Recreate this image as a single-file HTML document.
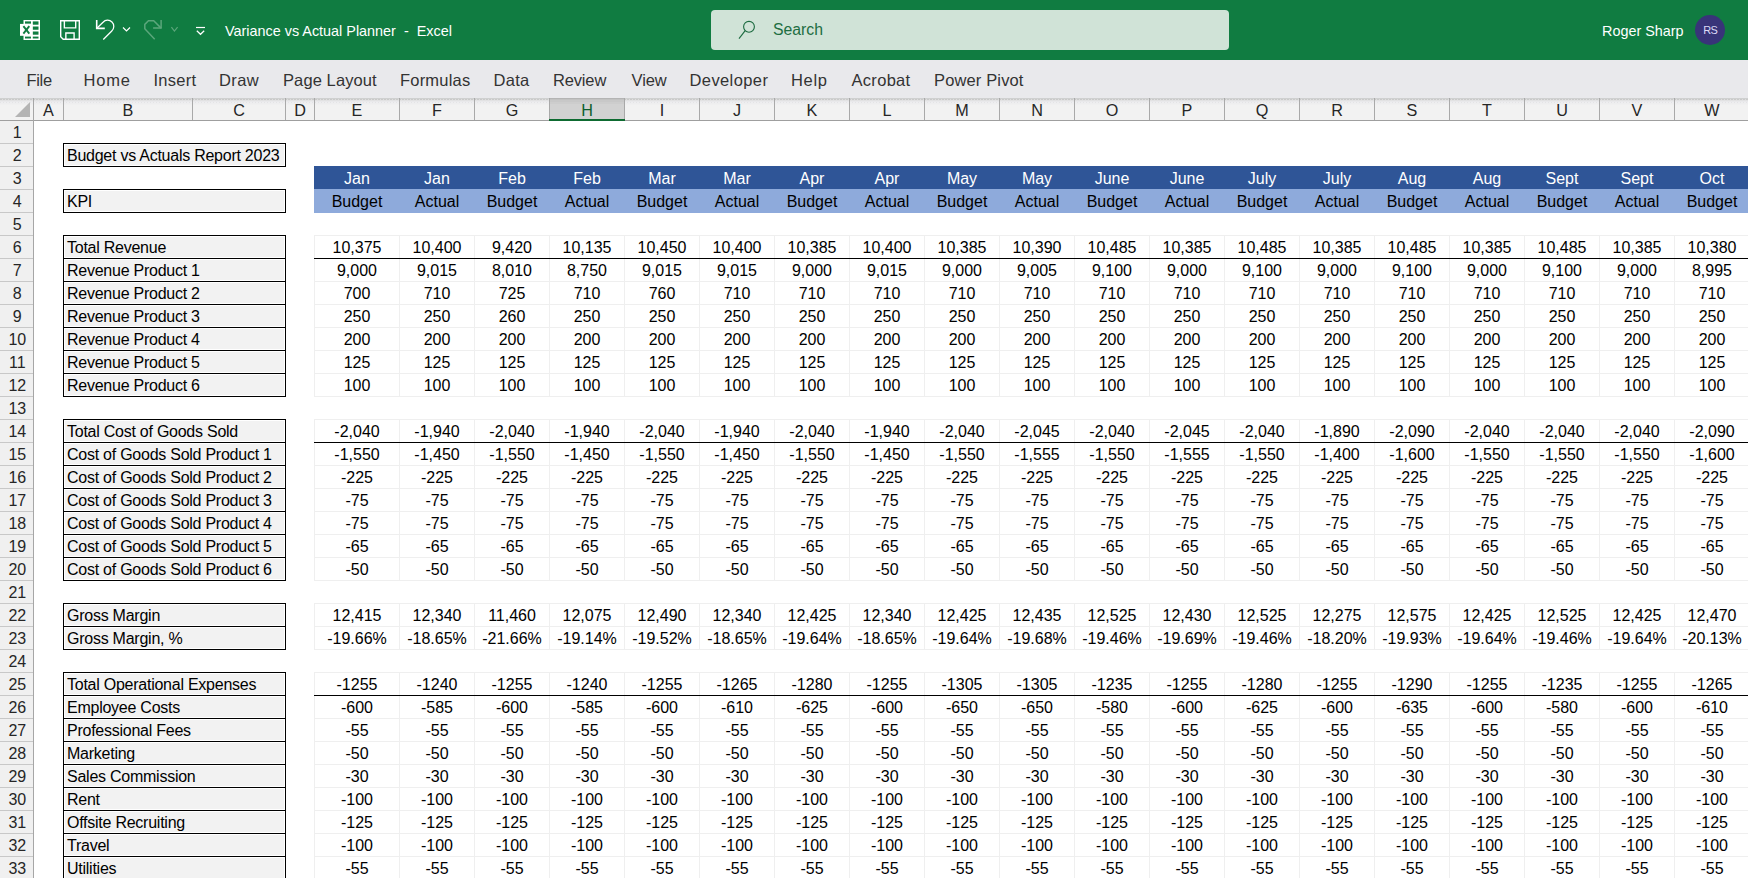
<!DOCTYPE html>
<html><head><meta charset="utf-8"><title>Variance vs Actual Planner - Excel</title><style>
html,body{margin:0;padding:0;}
body{width:1748px;height:878px;overflow:hidden;position:relative;background:#fff;font-family:"Liberation Sans", sans-serif;}
.r{position:absolute;}
.t{position:absolute;white-space:nowrap;font-family:"Liberation Sans", sans-serif;}
.tab{font-size:16.5px;line-height:24px;color:#333;}
</style></head><body>
<div class="r" style="left:0px;top:0px;width:1748px;height:60px;background:#107c41;"></div>
<svg class="r" style="left:20px;top:20px" width="20" height="20" viewBox="0 0 20 20">
<rect x="3.5" y="0" width="16.6" height="20" fill="#fff"/>
<g fill="#107c41">
<rect x="5" y="1.4" width="6" height="2.3"/>
<rect x="5" y="16.6" width="6" height="1.9"/>
<rect x="12.8" y="1.4" width="5.7" height="3.3"/>
<rect x="12.8" y="6.5" width="5.7" height="3.25"/>
<rect x="12.8" y="11.5" width="5.7" height="3.2"/>
<rect x="12.8" y="16.6" width="5.7" height="1.9"/>
</g>
<rect x="0" y="3.9" width="12.2" height="11.9" fill="#fff"/>
<g stroke="#107c41" stroke-width="1.9">
<line x1="3.4" y1="6.2" x2="9.3" y2="13.6"/>
<line x1="9.3" y1="6.2" x2="3.4" y2="13.6"/>
</g>
</svg>
<svg class="r" style="left:60px;top:20px" width="20" height="20" viewBox="0 0 20 20">
<g fill="none" stroke="#fff" stroke-width="1.4">
<path d="M0.7 0.7H19.3V19.3H3.2L0.7 16.8Z"/>
<path d="M4.35 0.7V7.85H15.7V0.7"/>
<path d="M5.85 19.3V13H14.1V19.3"/>
</g></svg>
<svg class="r" style="left:94px;top:18px" width="24" height="24" viewBox="0 0 24 24">
<g fill="none" stroke="#fff" stroke-width="1.25">
<path d="M2.7 2V10.4H10.8" stroke-width="1.6"/>
<path d="M2.6 10.5L9.02 4.22A6.2 6.2 0 1 1 17.78 12.98L9.28 21.48"/>
</g></svg>
<svg class="r" style="left:121px;top:25px" width="11" height="9" viewBox="0 0 11 9">
<path d="M2 2.5L5.5 6L9 2.5" fill="none" stroke="#fff" stroke-width="1.2"/></svg>
<svg class="r" style="left:142px;top:18px" width="24" height="24" viewBox="0 0 24 24">
<g fill="none" stroke="#5ba67b" stroke-width="1.5" stroke-linejoin="miter">
<path d="M19.1 2.1V10.1H11.1"/>
<path d="M19.1 10.1L11.7 2.8H6.45L2.8 6.4V10.8L12.7 21.3"/>
</g></svg>
<svg class="r" style="left:169px;top:25px" width="11" height="9" viewBox="0 0 11 9">
<path d="M2.4 2.2L5.4 6.1L8.6 2.2" fill="none" stroke="#5ba67b" stroke-width="1.2"/></svg>
<svg class="r" style="left:194px;top:24px" width="13" height="13" viewBox="0 0 13 13">
<g fill="none" stroke="#fff" stroke-width="1.2">
<line x1="2" y1="3.5" x2="11" y2="3.5"/>
<path d="M2.8 6.8L6.5 10.3L10.2 6.8"/>
</g></svg>
<div class="t" style="left:225px;top:18.71px;font-size:14.4px;line-height:24px;color:#fff;white-space:pre;">Variance vs Actual Planner  -  Excel</div>
<div class="r" style="left:711px;top:10px;width:518px;height:40px;background:#d0e3d7;border-radius:4px;"></div>
<svg class="r" style="left:736px;top:18px" width="22" height="24" viewBox="0 0 22 24">
<g fill="none" stroke="#1b6a3f" stroke-width="1.1">
<circle cx="13" cy="8.8" r="5.4"/>
<line x1="9.2" y1="12.6" x2="3" y2="20.6"/>
</g></svg>
<div class="t" style="left:773px;top:17.53px;font-size:15.8px;line-height:24px;color:#1d6e42;">Search</div>
<div class="t" style="left:1602px;top:18.71px;font-size:14.4px;line-height:24px;color:#fff;">Roger Sharp</div>
<div class="r" style="left:1695px;top:15px;width:30px;height:30px;background:#383479;border-radius:50%;"></div>
<div class="t" style="left:1695px;top:18.39px;font-size:11px;line-height:24px;color:#dcdaf7;width:30px;text-align:center;letter-spacing:-0.8px;text-indent:0.3px;">RS</div>
<div class="r" style="left:0px;top:60px;width:1748px;height:38px;background:#e9e9ec;"></div>
<div class="t" style="left:26.5px;top:68.28px;font-size:16.5px;line-height:24px;color:#333;letter-spacing:-0.333px;">File</div>
<div class="t" style="left:83.5px;top:68.28px;font-size:16.5px;line-height:24px;color:#333;letter-spacing:0.800px;">Home</div>
<div class="t" style="left:153.5px;top:68.28px;font-size:16.5px;line-height:24px;color:#333;letter-spacing:0.240px;">Insert</div>
<div class="t" style="left:219.0px;top:68.28px;font-size:16.5px;line-height:24px;color:#333;letter-spacing:0.400px;">Draw</div>
<div class="t" style="left:283.0px;top:68.28px;font-size:16.5px;line-height:24px;color:#333;letter-spacing:0.100px;">Page Layout</div>
<div class="t" style="left:400.0px;top:68.28px;font-size:16.5px;line-height:24px;color:#333;letter-spacing:0.200px;">Formulas</div>
<div class="t" style="left:493.5px;top:68.28px;font-size:16.5px;line-height:24px;color:#333;letter-spacing:0.267px;">Data</div>
<div class="t" style="left:553.0px;top:68.28px;font-size:16.5px;line-height:24px;color:#333;letter-spacing:-0.160px;">Review</div>
<div class="t" style="left:631.5px;top:68.28px;font-size:16.5px;line-height:24px;color:#333;letter-spacing:-0.067px;">View</div>
<div class="t" style="left:689.5px;top:68.28px;font-size:16.5px;line-height:24px;color:#333;letter-spacing:0.400px;">Developer</div>
<div class="t" style="left:791.0px;top:68.28px;font-size:16.5px;line-height:24px;color:#333;letter-spacing:0.667px;">Help</div>
<div class="t" style="left:851.5px;top:68.28px;font-size:16.5px;line-height:24px;color:#333;letter-spacing:0.300px;">Acrobat</div>
<div class="t" style="left:934.0px;top:68.28px;font-size:16.5px;line-height:24px;color:#333;letter-spacing:0.140px;">Power Pivot</div>
<div class="r" style="left:0px;top:98px;width:1748px;height:22px;background:linear-gradient(#cfd0d0 0 1px,#d8d8d8 1px 2px,#e2e2e3 2px 3px,#e9e9eb 3px 4px,#ebebed 4px 5px,#eeeeef 5px 6px,#f2f2f2 7px);"></div>
<div class="r" style="left:0px;top:99px;width:1748px;height:1px;background:repeating-linear-gradient(90deg,#c9c9c9 0 2px,#dedede 2px 3px);"></div>
<div class="r" style="left:0px;top:102px;width:1748px;height:1px;background:repeating-linear-gradient(90deg,#e4e4e6 0 1px,#eeeef0 1px 3px);"></div>
<div class="r" style="left:549px;top:98px;width:75px;height:22px;background:linear-gradient(#b4b4b4 0 1px,#c2c2c2 1px 2px,#c8c8c8 2px 4px,#cdcdcd 4px 6px,#d2d2d2 6px);"></div>
<div class="r" style="left:33px;top:98px;width:1px;height:22px;background:#a9a9a9;"></div>
<div class="r" style="left:63px;top:98px;width:1px;height:22px;background:#a9a9a9;"></div>
<div class="r" style="left:192px;top:98px;width:1px;height:22px;background:#a9a9a9;"></div>
<div class="r" style="left:285px;top:98px;width:1px;height:22px;background:#a9a9a9;"></div>
<div class="r" style="left:314px;top:98px;width:1px;height:22px;background:#a9a9a9;"></div>
<div class="r" style="left:399px;top:98px;width:1px;height:22px;background:#a9a9a9;"></div>
<div class="r" style="left:474px;top:98px;width:1px;height:22px;background:#a9a9a9;"></div>
<div class="r" style="left:549px;top:98px;width:1px;height:22px;background:#a9a9a9;"></div>
<div class="r" style="left:624px;top:98px;width:1px;height:22px;background:#a9a9a9;"></div>
<div class="r" style="left:699px;top:98px;width:1px;height:22px;background:#a9a9a9;"></div>
<div class="r" style="left:774px;top:98px;width:1px;height:22px;background:#a9a9a9;"></div>
<div class="r" style="left:849px;top:98px;width:1px;height:22px;background:#a9a9a9;"></div>
<div class="r" style="left:924px;top:98px;width:1px;height:22px;background:#a9a9a9;"></div>
<div class="r" style="left:999px;top:98px;width:1px;height:22px;background:#a9a9a9;"></div>
<div class="r" style="left:1074px;top:98px;width:1px;height:22px;background:#a9a9a9;"></div>
<div class="r" style="left:1149px;top:98px;width:1px;height:22px;background:#a9a9a9;"></div>
<div class="r" style="left:1224px;top:98px;width:1px;height:22px;background:#a9a9a9;"></div>
<div class="r" style="left:1299px;top:98px;width:1px;height:22px;background:#a9a9a9;"></div>
<div class="r" style="left:1374px;top:98px;width:1px;height:22px;background:#a9a9a9;"></div>
<div class="r" style="left:1449px;top:98px;width:1px;height:22px;background:#a9a9a9;"></div>
<div class="r" style="left:1524px;top:98px;width:1px;height:22px;background:#a9a9a9;"></div>
<div class="r" style="left:1599px;top:98px;width:1px;height:22px;background:#a9a9a9;"></div>
<div class="r" style="left:1674px;top:98px;width:1px;height:22px;background:#a9a9a9;"></div>
<div class="r" style="left:549px;top:98px;width:1px;height:22px;background:#a8a8a8;"></div>
<div class="r" style="left:624px;top:98px;width:1px;height:22px;background:#a8a8a8;"></div>
<div class="r" style="left:0px;top:120px;width:1748px;height:1px;background:#9f9f9f;"></div>
<div class="r" style="left:549px;top:119px;width:76px;height:2px;background:#0e6b31;"></div>
<div class="t" style="left:34px;top:97.99px;font-size:16.2px;line-height:24px;color:#262626;width:29px;text-align:center;">A</div>
<div class="t" style="left:64px;top:97.99px;font-size:16.2px;line-height:24px;color:#262626;width:128px;text-align:center;">B</div>
<div class="t" style="left:193px;top:97.99px;font-size:16.2px;line-height:24px;color:#262626;width:92px;text-align:center;">C</div>
<div class="t" style="left:286px;top:97.99px;font-size:16.2px;line-height:24px;color:#262626;width:28px;text-align:center;">D</div>
<div class="t" style="left:315px;top:97.99px;font-size:16.2px;line-height:24px;color:#262626;width:84px;text-align:center;">E</div>
<div class="t" style="left:400px;top:97.99px;font-size:16.2px;line-height:24px;color:#262626;width:74px;text-align:center;">F</div>
<div class="t" style="left:475px;top:97.99px;font-size:16.2px;line-height:24px;color:#262626;width:74px;text-align:center;">G</div>
<div class="t" style="left:550px;top:97.99px;font-size:16.2px;line-height:24px;color:#0d5f2e;width:74px;text-align:center;">H</div>
<div class="t" style="left:625px;top:97.99px;font-size:16.2px;line-height:24px;color:#262626;width:74px;text-align:center;">I</div>
<div class="t" style="left:700px;top:97.99px;font-size:16.2px;line-height:24px;color:#262626;width:74px;text-align:center;">J</div>
<div class="t" style="left:775px;top:97.99px;font-size:16.2px;line-height:24px;color:#262626;width:74px;text-align:center;">K</div>
<div class="t" style="left:850px;top:97.99px;font-size:16.2px;line-height:24px;color:#262626;width:74px;text-align:center;">L</div>
<div class="t" style="left:925px;top:97.99px;font-size:16.2px;line-height:24px;color:#262626;width:74px;text-align:center;">M</div>
<div class="t" style="left:1000px;top:97.99px;font-size:16.2px;line-height:24px;color:#262626;width:74px;text-align:center;">N</div>
<div class="t" style="left:1075px;top:97.99px;font-size:16.2px;line-height:24px;color:#262626;width:74px;text-align:center;">O</div>
<div class="t" style="left:1150px;top:97.99px;font-size:16.2px;line-height:24px;color:#262626;width:74px;text-align:center;">P</div>
<div class="t" style="left:1225px;top:97.99px;font-size:16.2px;line-height:24px;color:#262626;width:74px;text-align:center;">Q</div>
<div class="t" style="left:1300px;top:97.99px;font-size:16.2px;line-height:24px;color:#262626;width:74px;text-align:center;">R</div>
<div class="t" style="left:1375px;top:97.99px;font-size:16.2px;line-height:24px;color:#262626;width:74px;text-align:center;">S</div>
<div class="t" style="left:1450px;top:97.99px;font-size:16.2px;line-height:24px;color:#262626;width:74px;text-align:center;">T</div>
<div class="t" style="left:1525px;top:97.99px;font-size:16.2px;line-height:24px;color:#262626;width:74px;text-align:center;">U</div>
<div class="t" style="left:1600px;top:97.99px;font-size:16.2px;line-height:24px;color:#262626;width:74px;text-align:center;">V</div>
<div class="t" style="left:1675px;top:97.99px;font-size:16.2px;line-height:24px;color:#262626;width:74px;text-align:center;">W</div>
<svg class="r" style="left:0px;top:98px" width="33" height="22"><path d="M30 4V19H15Z" fill="#b4b4b4"/></svg>
<div class="r" style="left:0px;top:121px;width:33px;height:757px;background:#f0f0f0;"></div>
<div class="r" style="left:33px;top:98px;width:1px;height:780px;background:#a6a6a6;"></div>
<div class="t" style="left:0.8px;top:121.06px;font-size:16px;line-height:24px;color:#262626;width:33px;text-align:center;">1</div>
<div class="r" style="left:0px;top:143px;width:33px;height:1px;background:#c8c8c8;"></div>
<div class="t" style="left:0.8px;top:144.06px;font-size:16px;line-height:24px;color:#262626;width:33px;text-align:center;">2</div>
<div class="r" style="left:0px;top:166px;width:33px;height:1px;background:#c8c8c8;"></div>
<div class="t" style="left:0.8px;top:167.06px;font-size:16px;line-height:24px;color:#262626;width:33px;text-align:center;">3</div>
<div class="r" style="left:0px;top:189px;width:33px;height:1px;background:#c8c8c8;"></div>
<div class="t" style="left:0.8px;top:190.06px;font-size:16px;line-height:24px;color:#262626;width:33px;text-align:center;">4</div>
<div class="r" style="left:0px;top:212px;width:33px;height:1px;background:#c8c8c8;"></div>
<div class="t" style="left:0.8px;top:213.06px;font-size:16px;line-height:24px;color:#262626;width:33px;text-align:center;">5</div>
<div class="r" style="left:0px;top:235px;width:33px;height:1px;background:#c8c8c8;"></div>
<div class="t" style="left:0.8px;top:236.06px;font-size:16px;line-height:24px;color:#262626;width:33px;text-align:center;">6</div>
<div class="r" style="left:0px;top:258px;width:33px;height:1px;background:#c8c8c8;"></div>
<div class="t" style="left:0.8px;top:259.06px;font-size:16px;line-height:24px;color:#262626;width:33px;text-align:center;">7</div>
<div class="r" style="left:0px;top:281px;width:33px;height:1px;background:#c8c8c8;"></div>
<div class="t" style="left:0.8px;top:282.06px;font-size:16px;line-height:24px;color:#262626;width:33px;text-align:center;">8</div>
<div class="r" style="left:0px;top:304px;width:33px;height:1px;background:#c8c8c8;"></div>
<div class="t" style="left:0.8px;top:305.06px;font-size:16px;line-height:24px;color:#262626;width:33px;text-align:center;">9</div>
<div class="r" style="left:0px;top:327px;width:33px;height:1px;background:#c8c8c8;"></div>
<div class="t" style="left:0.8px;top:328.06px;font-size:16px;line-height:24px;color:#262626;width:33px;text-align:center;">10</div>
<div class="r" style="left:0px;top:350px;width:33px;height:1px;background:#c8c8c8;"></div>
<div class="t" style="left:0.8px;top:351.06px;font-size:16px;line-height:24px;color:#262626;width:33px;text-align:center;">11</div>
<div class="r" style="left:0px;top:373px;width:33px;height:1px;background:#c8c8c8;"></div>
<div class="t" style="left:0.8px;top:374.06px;font-size:16px;line-height:24px;color:#262626;width:33px;text-align:center;">12</div>
<div class="r" style="left:0px;top:396px;width:33px;height:1px;background:#c8c8c8;"></div>
<div class="t" style="left:0.8px;top:397.06px;font-size:16px;line-height:24px;color:#262626;width:33px;text-align:center;">13</div>
<div class="r" style="left:0px;top:419px;width:33px;height:1px;background:#c8c8c8;"></div>
<div class="t" style="left:0.8px;top:420.06px;font-size:16px;line-height:24px;color:#262626;width:33px;text-align:center;">14</div>
<div class="r" style="left:0px;top:442px;width:33px;height:1px;background:#c8c8c8;"></div>
<div class="t" style="left:0.8px;top:443.06px;font-size:16px;line-height:24px;color:#262626;width:33px;text-align:center;">15</div>
<div class="r" style="left:0px;top:465px;width:33px;height:1px;background:#c8c8c8;"></div>
<div class="t" style="left:0.8px;top:466.06px;font-size:16px;line-height:24px;color:#262626;width:33px;text-align:center;">16</div>
<div class="r" style="left:0px;top:488px;width:33px;height:1px;background:#c8c8c8;"></div>
<div class="t" style="left:0.8px;top:489.06px;font-size:16px;line-height:24px;color:#262626;width:33px;text-align:center;">17</div>
<div class="r" style="left:0px;top:511px;width:33px;height:1px;background:#c8c8c8;"></div>
<div class="t" style="left:0.8px;top:512.06px;font-size:16px;line-height:24px;color:#262626;width:33px;text-align:center;">18</div>
<div class="r" style="left:0px;top:534px;width:33px;height:1px;background:#c8c8c8;"></div>
<div class="t" style="left:0.8px;top:535.06px;font-size:16px;line-height:24px;color:#262626;width:33px;text-align:center;">19</div>
<div class="r" style="left:0px;top:557px;width:33px;height:1px;background:#c8c8c8;"></div>
<div class="t" style="left:0.8px;top:558.06px;font-size:16px;line-height:24px;color:#262626;width:33px;text-align:center;">20</div>
<div class="r" style="left:0px;top:580px;width:33px;height:1px;background:#c8c8c8;"></div>
<div class="t" style="left:0.8px;top:581.06px;font-size:16px;line-height:24px;color:#262626;width:33px;text-align:center;">21</div>
<div class="r" style="left:0px;top:603px;width:33px;height:1px;background:#c8c8c8;"></div>
<div class="t" style="left:0.8px;top:604.06px;font-size:16px;line-height:24px;color:#262626;width:33px;text-align:center;">22</div>
<div class="r" style="left:0px;top:626px;width:33px;height:1px;background:#c8c8c8;"></div>
<div class="t" style="left:0.8px;top:627.06px;font-size:16px;line-height:24px;color:#262626;width:33px;text-align:center;">23</div>
<div class="r" style="left:0px;top:649px;width:33px;height:1px;background:#c8c8c8;"></div>
<div class="t" style="left:0.8px;top:650.06px;font-size:16px;line-height:24px;color:#262626;width:33px;text-align:center;">24</div>
<div class="r" style="left:0px;top:672px;width:33px;height:1px;background:#c8c8c8;"></div>
<div class="t" style="left:0.8px;top:673.06px;font-size:16px;line-height:24px;color:#262626;width:33px;text-align:center;">25</div>
<div class="r" style="left:0px;top:695px;width:33px;height:1px;background:#c8c8c8;"></div>
<div class="t" style="left:0.8px;top:696.06px;font-size:16px;line-height:24px;color:#262626;width:33px;text-align:center;">26</div>
<div class="r" style="left:0px;top:718px;width:33px;height:1px;background:#c8c8c8;"></div>
<div class="t" style="left:0.8px;top:719.06px;font-size:16px;line-height:24px;color:#262626;width:33px;text-align:center;">27</div>
<div class="r" style="left:0px;top:741px;width:33px;height:1px;background:#c8c8c8;"></div>
<div class="t" style="left:0.8px;top:742.06px;font-size:16px;line-height:24px;color:#262626;width:33px;text-align:center;">28</div>
<div class="r" style="left:0px;top:764px;width:33px;height:1px;background:#c8c8c8;"></div>
<div class="t" style="left:0.8px;top:765.06px;font-size:16px;line-height:24px;color:#262626;width:33px;text-align:center;">29</div>
<div class="r" style="left:0px;top:787px;width:33px;height:1px;background:#c8c8c8;"></div>
<div class="t" style="left:0.8px;top:788.06px;font-size:16px;line-height:24px;color:#262626;width:33px;text-align:center;">30</div>
<div class="r" style="left:0px;top:810px;width:33px;height:1px;background:#c8c8c8;"></div>
<div class="t" style="left:0.8px;top:811.06px;font-size:16px;line-height:24px;color:#262626;width:33px;text-align:center;">31</div>
<div class="r" style="left:0px;top:833px;width:33px;height:1px;background:#c8c8c8;"></div>
<div class="t" style="left:0.8px;top:834.06px;font-size:16px;line-height:24px;color:#262626;width:33px;text-align:center;">32</div>
<div class="r" style="left:0px;top:856px;width:33px;height:1px;background:#c8c8c8;"></div>
<div class="t" style="left:0.8px;top:857.06px;font-size:16px;line-height:24px;color:#262626;width:33px;text-align:center;">33</div>
<div class="r" style="left:314px;top:166px;width:1434px;height:23px;background:#2f5597;"></div>
<div class="r" style="left:314px;top:189px;width:1434px;height:24px;background:#8eaadb;"></div>
<div class="t" style="left:315px;top:167.06px;font-size:16px;line-height:24px;color:#fff;width:84px;text-align:center;">Jan</div>
<div class="t" style="left:315px;top:190.06px;font-size:16px;line-height:24px;color:#000;width:84px;text-align:center;">Budget</div>
<div class="t" style="left:400px;top:167.06px;font-size:16px;line-height:24px;color:#fff;width:74px;text-align:center;">Jan</div>
<div class="t" style="left:400px;top:190.06px;font-size:16px;line-height:24px;color:#000;width:74px;text-align:center;">Actual</div>
<div class="t" style="left:475px;top:167.06px;font-size:16px;line-height:24px;color:#fff;width:74px;text-align:center;">Feb</div>
<div class="t" style="left:475px;top:190.06px;font-size:16px;line-height:24px;color:#000;width:74px;text-align:center;">Budget</div>
<div class="t" style="left:550px;top:167.06px;font-size:16px;line-height:24px;color:#fff;width:74px;text-align:center;">Feb</div>
<div class="t" style="left:550px;top:190.06px;font-size:16px;line-height:24px;color:#000;width:74px;text-align:center;">Actual</div>
<div class="t" style="left:625px;top:167.06px;font-size:16px;line-height:24px;color:#fff;width:74px;text-align:center;">Mar</div>
<div class="t" style="left:625px;top:190.06px;font-size:16px;line-height:24px;color:#000;width:74px;text-align:center;">Budget</div>
<div class="t" style="left:700px;top:167.06px;font-size:16px;line-height:24px;color:#fff;width:74px;text-align:center;">Mar</div>
<div class="t" style="left:700px;top:190.06px;font-size:16px;line-height:24px;color:#000;width:74px;text-align:center;">Actual</div>
<div class="t" style="left:775px;top:167.06px;font-size:16px;line-height:24px;color:#fff;width:74px;text-align:center;">Apr</div>
<div class="t" style="left:775px;top:190.06px;font-size:16px;line-height:24px;color:#000;width:74px;text-align:center;">Budget</div>
<div class="t" style="left:850px;top:167.06px;font-size:16px;line-height:24px;color:#fff;width:74px;text-align:center;">Apr</div>
<div class="t" style="left:850px;top:190.06px;font-size:16px;line-height:24px;color:#000;width:74px;text-align:center;">Actual</div>
<div class="t" style="left:925px;top:167.06px;font-size:16px;line-height:24px;color:#fff;width:74px;text-align:center;">May</div>
<div class="t" style="left:925px;top:190.06px;font-size:16px;line-height:24px;color:#000;width:74px;text-align:center;">Budget</div>
<div class="t" style="left:1000px;top:167.06px;font-size:16px;line-height:24px;color:#fff;width:74px;text-align:center;">May</div>
<div class="t" style="left:1000px;top:190.06px;font-size:16px;line-height:24px;color:#000;width:74px;text-align:center;">Actual</div>
<div class="t" style="left:1075px;top:167.06px;font-size:16px;line-height:24px;color:#fff;width:74px;text-align:center;">June</div>
<div class="t" style="left:1075px;top:190.06px;font-size:16px;line-height:24px;color:#000;width:74px;text-align:center;">Budget</div>
<div class="t" style="left:1150px;top:167.06px;font-size:16px;line-height:24px;color:#fff;width:74px;text-align:center;">June</div>
<div class="t" style="left:1150px;top:190.06px;font-size:16px;line-height:24px;color:#000;width:74px;text-align:center;">Actual</div>
<div class="t" style="left:1225px;top:167.06px;font-size:16px;line-height:24px;color:#fff;width:74px;text-align:center;">July</div>
<div class="t" style="left:1225px;top:190.06px;font-size:16px;line-height:24px;color:#000;width:74px;text-align:center;">Budget</div>
<div class="t" style="left:1300px;top:167.06px;font-size:16px;line-height:24px;color:#fff;width:74px;text-align:center;">July</div>
<div class="t" style="left:1300px;top:190.06px;font-size:16px;line-height:24px;color:#000;width:74px;text-align:center;">Actual</div>
<div class="t" style="left:1375px;top:167.06px;font-size:16px;line-height:24px;color:#fff;width:74px;text-align:center;">Aug</div>
<div class="t" style="left:1375px;top:190.06px;font-size:16px;line-height:24px;color:#000;width:74px;text-align:center;">Budget</div>
<div class="t" style="left:1450px;top:167.06px;font-size:16px;line-height:24px;color:#fff;width:74px;text-align:center;">Aug</div>
<div class="t" style="left:1450px;top:190.06px;font-size:16px;line-height:24px;color:#000;width:74px;text-align:center;">Actual</div>
<div class="t" style="left:1525px;top:167.06px;font-size:16px;line-height:24px;color:#fff;width:74px;text-align:center;">Sept</div>
<div class="t" style="left:1525px;top:190.06px;font-size:16px;line-height:24px;color:#000;width:74px;text-align:center;">Budget</div>
<div class="t" style="left:1600px;top:167.06px;font-size:16px;line-height:24px;color:#fff;width:74px;text-align:center;">Sept</div>
<div class="t" style="left:1600px;top:190.06px;font-size:16px;line-height:24px;color:#000;width:74px;text-align:center;">Actual</div>
<div class="t" style="left:1675px;top:167.06px;font-size:16px;line-height:24px;color:#fff;width:74px;text-align:center;">Oct</div>
<div class="t" style="left:1675px;top:190.06px;font-size:16px;line-height:24px;color:#000;width:74px;text-align:center;">Budget</div>
<div class="r" style="left:63px;top:143px;width:223px;height:24px;background:#000;"></div>
<div class="r" style="left:64px;top:144px;width:221px;height:22px;background:#fff;"></div>
<div class="r" style="left:65px;top:145px;width:219px;height:20px;background:#f2f2f2;"></div>
<div class="t" style="left:67px;top:144.06px;font-size:16px;line-height:24px;color:#000;white-space:pre;letter-spacing:-0.25px;">Budget vs Actuals Report 2023</div>
<div class="r" style="left:63px;top:189px;width:223px;height:24px;background:#000;"></div>
<div class="r" style="left:64px;top:190px;width:221px;height:22px;background:#fff;"></div>
<div class="r" style="left:65px;top:191px;width:219px;height:20px;background:#f2f2f2;"></div>
<div class="t" style="left:67px;top:190.06px;font-size:16px;line-height:24px;color:#000;white-space:pre;letter-spacing:-0.25px;">KPI</div>
<div class="r" style="left:63px;top:235px;width:223px;height:24px;background:#000;"></div>
<div class="r" style="left:64px;top:236px;width:221px;height:22px;background:#fff;"></div>
<div class="r" style="left:65px;top:237px;width:219px;height:20px;background:#f2f2f2;"></div>
<div class="t" style="left:67px;top:236.06px;font-size:16px;line-height:24px;color:#000;white-space:pre;letter-spacing:-0.25px;">Total Revenue</div>
<div class="r" style="left:63px;top:258px;width:223px;height:24px;background:#000;"></div>
<div class="r" style="left:64px;top:259px;width:221px;height:22px;background:#fff;"></div>
<div class="r" style="left:65px;top:260px;width:219px;height:20px;background:#f2f2f2;"></div>
<div class="t" style="left:67px;top:259.06px;font-size:16px;line-height:24px;color:#000;white-space:pre;letter-spacing:-0.25px;">Revenue Product 1</div>
<div class="r" style="left:63px;top:281px;width:223px;height:24px;background:#000;"></div>
<div class="r" style="left:64px;top:282px;width:221px;height:22px;background:#fff;"></div>
<div class="r" style="left:65px;top:283px;width:219px;height:20px;background:#f2f2f2;"></div>
<div class="t" style="left:67px;top:282.06px;font-size:16px;line-height:24px;color:#000;white-space:pre;letter-spacing:-0.25px;">Revenue Product 2</div>
<div class="r" style="left:63px;top:304px;width:223px;height:24px;background:#000;"></div>
<div class="r" style="left:64px;top:305px;width:221px;height:22px;background:#fff;"></div>
<div class="r" style="left:65px;top:306px;width:219px;height:20px;background:#f2f2f2;"></div>
<div class="t" style="left:67px;top:305.06px;font-size:16px;line-height:24px;color:#000;white-space:pre;letter-spacing:-0.25px;">Revenue Product 3</div>
<div class="r" style="left:63px;top:327px;width:223px;height:24px;background:#000;"></div>
<div class="r" style="left:64px;top:328px;width:221px;height:22px;background:#fff;"></div>
<div class="r" style="left:65px;top:329px;width:219px;height:20px;background:#f2f2f2;"></div>
<div class="t" style="left:67px;top:328.06px;font-size:16px;line-height:24px;color:#000;white-space:pre;letter-spacing:-0.25px;">Revenue Product 4</div>
<div class="r" style="left:63px;top:350px;width:223px;height:24px;background:#000;"></div>
<div class="r" style="left:64px;top:351px;width:221px;height:22px;background:#fff;"></div>
<div class="r" style="left:65px;top:352px;width:219px;height:20px;background:#f2f2f2;"></div>
<div class="t" style="left:67px;top:351.06px;font-size:16px;line-height:24px;color:#000;white-space:pre;letter-spacing:-0.25px;">Revenue Product 5</div>
<div class="r" style="left:63px;top:373px;width:223px;height:24px;background:#000;"></div>
<div class="r" style="left:64px;top:374px;width:221px;height:22px;background:#fff;"></div>
<div class="r" style="left:65px;top:375px;width:219px;height:20px;background:#f2f2f2;"></div>
<div class="t" style="left:67px;top:374.06px;font-size:16px;line-height:24px;color:#000;white-space:pre;letter-spacing:-0.25px;">Revenue Product 6</div>
<div class="r" style="left:63px;top:419px;width:223px;height:24px;background:#000;"></div>
<div class="r" style="left:64px;top:420px;width:221px;height:22px;background:#fff;"></div>
<div class="r" style="left:65px;top:421px;width:219px;height:20px;background:#f2f2f2;"></div>
<div class="t" style="left:67px;top:420.06px;font-size:16px;line-height:24px;color:#000;white-space:pre;letter-spacing:-0.25px;">Total Cost of Goods Sold</div>
<div class="r" style="left:63px;top:442px;width:223px;height:24px;background:#000;"></div>
<div class="r" style="left:64px;top:443px;width:221px;height:22px;background:#fff;"></div>
<div class="r" style="left:65px;top:444px;width:219px;height:20px;background:#f2f2f2;"></div>
<div class="t" style="left:67px;top:443.06px;font-size:16px;line-height:24px;color:#000;white-space:pre;letter-spacing:-0.25px;">Cost of Goods Sold Product 1</div>
<div class="r" style="left:63px;top:465px;width:223px;height:24px;background:#000;"></div>
<div class="r" style="left:64px;top:466px;width:221px;height:22px;background:#fff;"></div>
<div class="r" style="left:65px;top:467px;width:219px;height:20px;background:#f2f2f2;"></div>
<div class="t" style="left:67px;top:466.06px;font-size:16px;line-height:24px;color:#000;white-space:pre;letter-spacing:-0.25px;">Cost of Goods Sold Product 2</div>
<div class="r" style="left:63px;top:488px;width:223px;height:24px;background:#000;"></div>
<div class="r" style="left:64px;top:489px;width:221px;height:22px;background:#fff;"></div>
<div class="r" style="left:65px;top:490px;width:219px;height:20px;background:#f2f2f2;"></div>
<div class="t" style="left:67px;top:489.06px;font-size:16px;line-height:24px;color:#000;white-space:pre;letter-spacing:-0.25px;">Cost of Goods Sold Product 3</div>
<div class="r" style="left:63px;top:511px;width:223px;height:24px;background:#000;"></div>
<div class="r" style="left:64px;top:512px;width:221px;height:22px;background:#fff;"></div>
<div class="r" style="left:65px;top:513px;width:219px;height:20px;background:#f2f2f2;"></div>
<div class="t" style="left:67px;top:512.06px;font-size:16px;line-height:24px;color:#000;white-space:pre;letter-spacing:-0.25px;">Cost of Goods Sold Product 4</div>
<div class="r" style="left:63px;top:534px;width:223px;height:24px;background:#000;"></div>
<div class="r" style="left:64px;top:535px;width:221px;height:22px;background:#fff;"></div>
<div class="r" style="left:65px;top:536px;width:219px;height:20px;background:#f2f2f2;"></div>
<div class="t" style="left:67px;top:535.06px;font-size:16px;line-height:24px;color:#000;white-space:pre;letter-spacing:-0.25px;">Cost of Goods Sold Product 5</div>
<div class="r" style="left:63px;top:557px;width:223px;height:24px;background:#000;"></div>
<div class="r" style="left:64px;top:558px;width:221px;height:22px;background:#fff;"></div>
<div class="r" style="left:65px;top:559px;width:219px;height:20px;background:#f2f2f2;"></div>
<div class="t" style="left:67px;top:558.06px;font-size:16px;line-height:24px;color:#000;white-space:pre;letter-spacing:-0.25px;">Cost of Goods Sold Product 6</div>
<div class="r" style="left:63px;top:603px;width:223px;height:24px;background:#000;"></div>
<div class="r" style="left:64px;top:604px;width:221px;height:22px;background:#fff;"></div>
<div class="r" style="left:65px;top:605px;width:219px;height:20px;background:#f2f2f2;"></div>
<div class="t" style="left:67px;top:604.06px;font-size:16px;line-height:24px;color:#000;white-space:pre;letter-spacing:-0.25px;">Gross Margin</div>
<div class="r" style="left:63px;top:626px;width:223px;height:24px;background:#000;"></div>
<div class="r" style="left:64px;top:627px;width:221px;height:22px;background:#fff;"></div>
<div class="r" style="left:65px;top:628px;width:219px;height:20px;background:#f2f2f2;"></div>
<div class="t" style="left:67px;top:627.06px;font-size:16px;line-height:24px;color:#000;white-space:pre;letter-spacing:-0.25px;">Gross Margin, %</div>
<div class="r" style="left:63px;top:672px;width:223px;height:24px;background:#000;"></div>
<div class="r" style="left:64px;top:673px;width:221px;height:22px;background:#fff;"></div>
<div class="r" style="left:65px;top:674px;width:219px;height:20px;background:#f2f2f2;"></div>
<div class="t" style="left:67px;top:673.06px;font-size:16px;line-height:24px;color:#000;white-space:pre;letter-spacing:-0.25px;">Total Operational Expenses</div>
<div class="r" style="left:63px;top:695px;width:223px;height:24px;background:#000;"></div>
<div class="r" style="left:64px;top:696px;width:221px;height:22px;background:#fff;"></div>
<div class="r" style="left:65px;top:697px;width:219px;height:20px;background:#f2f2f2;"></div>
<div class="t" style="left:67px;top:696.06px;font-size:16px;line-height:24px;color:#000;white-space:pre;letter-spacing:-0.25px;">Employee Costs</div>
<div class="r" style="left:63px;top:718px;width:223px;height:24px;background:#000;"></div>
<div class="r" style="left:64px;top:719px;width:221px;height:22px;background:#fff;"></div>
<div class="r" style="left:65px;top:720px;width:219px;height:20px;background:#f2f2f2;"></div>
<div class="t" style="left:67px;top:719.06px;font-size:16px;line-height:24px;color:#000;white-space:pre;letter-spacing:-0.25px;">Professional Fees</div>
<div class="r" style="left:63px;top:741px;width:223px;height:24px;background:#000;"></div>
<div class="r" style="left:64px;top:742px;width:221px;height:22px;background:#fff;"></div>
<div class="r" style="left:65px;top:743px;width:219px;height:20px;background:#f2f2f2;"></div>
<div class="t" style="left:67px;top:742.06px;font-size:16px;line-height:24px;color:#000;white-space:pre;letter-spacing:-0.25px;">Marketing</div>
<div class="r" style="left:63px;top:764px;width:223px;height:24px;background:#000;"></div>
<div class="r" style="left:64px;top:765px;width:221px;height:22px;background:#fff;"></div>
<div class="r" style="left:65px;top:766px;width:219px;height:20px;background:#f2f2f2;"></div>
<div class="t" style="left:67px;top:765.06px;font-size:16px;line-height:24px;color:#000;white-space:pre;letter-spacing:-0.25px;">Sales Commission</div>
<div class="r" style="left:63px;top:787px;width:223px;height:24px;background:#000;"></div>
<div class="r" style="left:64px;top:788px;width:221px;height:22px;background:#fff;"></div>
<div class="r" style="left:65px;top:789px;width:219px;height:20px;background:#f2f2f2;"></div>
<div class="t" style="left:67px;top:788.06px;font-size:16px;line-height:24px;color:#000;white-space:pre;letter-spacing:-0.25px;">Rent</div>
<div class="r" style="left:63px;top:810px;width:223px;height:24px;background:#000;"></div>
<div class="r" style="left:64px;top:811px;width:221px;height:22px;background:#fff;"></div>
<div class="r" style="left:65px;top:812px;width:219px;height:20px;background:#f2f2f2;"></div>
<div class="t" style="left:67px;top:811.06px;font-size:16px;line-height:24px;color:#000;white-space:pre;letter-spacing:-0.25px;">Offsite Recruiting</div>
<div class="r" style="left:63px;top:833px;width:223px;height:24px;background:#000;"></div>
<div class="r" style="left:64px;top:834px;width:221px;height:22px;background:#fff;"></div>
<div class="r" style="left:65px;top:835px;width:219px;height:20px;background:#f2f2f2;"></div>
<div class="t" style="left:67px;top:834.06px;font-size:16px;line-height:24px;color:#000;white-space:pre;letter-spacing:-0.25px;">Travel</div>
<div class="r" style="left:63px;top:856px;width:223px;height:24px;background:#000;"></div>
<div class="r" style="left:64px;top:857px;width:221px;height:22px;background:#fff;"></div>
<div class="r" style="left:65px;top:858px;width:219px;height:20px;background:#f2f2f2;"></div>
<div class="t" style="left:67px;top:857.06px;font-size:16px;line-height:24px;color:#000;white-space:pre;letter-spacing:-0.25px;">Utilities</div>
<div class="r" style="left:314px;top:235px;width:1px;height:162px;background:#efefef;"></div>
<div class="r" style="left:399px;top:235px;width:1px;height:162px;background:#efefef;"></div>
<div class="r" style="left:474px;top:235px;width:1px;height:162px;background:#efefef;"></div>
<div class="r" style="left:549px;top:235px;width:1px;height:162px;background:#efefef;"></div>
<div class="r" style="left:624px;top:235px;width:1px;height:162px;background:#efefef;"></div>
<div class="r" style="left:699px;top:235px;width:1px;height:162px;background:#efefef;"></div>
<div class="r" style="left:774px;top:235px;width:1px;height:162px;background:#efefef;"></div>
<div class="r" style="left:849px;top:235px;width:1px;height:162px;background:#efefef;"></div>
<div class="r" style="left:924px;top:235px;width:1px;height:162px;background:#efefef;"></div>
<div class="r" style="left:999px;top:235px;width:1px;height:162px;background:#efefef;"></div>
<div class="r" style="left:1074px;top:235px;width:1px;height:162px;background:#efefef;"></div>
<div class="r" style="left:1149px;top:235px;width:1px;height:162px;background:#efefef;"></div>
<div class="r" style="left:1224px;top:235px;width:1px;height:162px;background:#efefef;"></div>
<div class="r" style="left:1299px;top:235px;width:1px;height:162px;background:#efefef;"></div>
<div class="r" style="left:1374px;top:235px;width:1px;height:162px;background:#efefef;"></div>
<div class="r" style="left:1449px;top:235px;width:1px;height:162px;background:#efefef;"></div>
<div class="r" style="left:1524px;top:235px;width:1px;height:162px;background:#efefef;"></div>
<div class="r" style="left:1599px;top:235px;width:1px;height:162px;background:#efefef;"></div>
<div class="r" style="left:1674px;top:235px;width:1px;height:162px;background:#efefef;"></div>
<div class="r" style="left:314px;top:235px;width:1434px;height:1px;background:#efefef;"></div>
<div class="r" style="left:314px;top:258px;width:1434px;height:1px;background:#efefef;"></div>
<div class="r" style="left:314px;top:281px;width:1434px;height:1px;background:#efefef;"></div>
<div class="r" style="left:314px;top:304px;width:1434px;height:1px;background:#efefef;"></div>
<div class="r" style="left:314px;top:327px;width:1434px;height:1px;background:#efefef;"></div>
<div class="r" style="left:314px;top:350px;width:1434px;height:1px;background:#efefef;"></div>
<div class="r" style="left:314px;top:373px;width:1434px;height:1px;background:#efefef;"></div>
<div class="r" style="left:314px;top:396px;width:1434px;height:1px;background:#efefef;"></div>
<div class="r" style="left:314px;top:419px;width:1px;height:162px;background:#efefef;"></div>
<div class="r" style="left:399px;top:419px;width:1px;height:162px;background:#efefef;"></div>
<div class="r" style="left:474px;top:419px;width:1px;height:162px;background:#efefef;"></div>
<div class="r" style="left:549px;top:419px;width:1px;height:162px;background:#efefef;"></div>
<div class="r" style="left:624px;top:419px;width:1px;height:162px;background:#efefef;"></div>
<div class="r" style="left:699px;top:419px;width:1px;height:162px;background:#efefef;"></div>
<div class="r" style="left:774px;top:419px;width:1px;height:162px;background:#efefef;"></div>
<div class="r" style="left:849px;top:419px;width:1px;height:162px;background:#efefef;"></div>
<div class="r" style="left:924px;top:419px;width:1px;height:162px;background:#efefef;"></div>
<div class="r" style="left:999px;top:419px;width:1px;height:162px;background:#efefef;"></div>
<div class="r" style="left:1074px;top:419px;width:1px;height:162px;background:#efefef;"></div>
<div class="r" style="left:1149px;top:419px;width:1px;height:162px;background:#efefef;"></div>
<div class="r" style="left:1224px;top:419px;width:1px;height:162px;background:#efefef;"></div>
<div class="r" style="left:1299px;top:419px;width:1px;height:162px;background:#efefef;"></div>
<div class="r" style="left:1374px;top:419px;width:1px;height:162px;background:#efefef;"></div>
<div class="r" style="left:1449px;top:419px;width:1px;height:162px;background:#efefef;"></div>
<div class="r" style="left:1524px;top:419px;width:1px;height:162px;background:#efefef;"></div>
<div class="r" style="left:1599px;top:419px;width:1px;height:162px;background:#efefef;"></div>
<div class="r" style="left:1674px;top:419px;width:1px;height:162px;background:#efefef;"></div>
<div class="r" style="left:314px;top:419px;width:1434px;height:1px;background:#efefef;"></div>
<div class="r" style="left:314px;top:442px;width:1434px;height:1px;background:#efefef;"></div>
<div class="r" style="left:314px;top:465px;width:1434px;height:1px;background:#efefef;"></div>
<div class="r" style="left:314px;top:488px;width:1434px;height:1px;background:#efefef;"></div>
<div class="r" style="left:314px;top:511px;width:1434px;height:1px;background:#efefef;"></div>
<div class="r" style="left:314px;top:534px;width:1434px;height:1px;background:#efefef;"></div>
<div class="r" style="left:314px;top:557px;width:1434px;height:1px;background:#efefef;"></div>
<div class="r" style="left:314px;top:580px;width:1434px;height:1px;background:#efefef;"></div>
<div class="r" style="left:314px;top:603px;width:1px;height:47px;background:#efefef;"></div>
<div class="r" style="left:399px;top:603px;width:1px;height:47px;background:#efefef;"></div>
<div class="r" style="left:474px;top:603px;width:1px;height:47px;background:#efefef;"></div>
<div class="r" style="left:549px;top:603px;width:1px;height:47px;background:#efefef;"></div>
<div class="r" style="left:624px;top:603px;width:1px;height:47px;background:#efefef;"></div>
<div class="r" style="left:699px;top:603px;width:1px;height:47px;background:#efefef;"></div>
<div class="r" style="left:774px;top:603px;width:1px;height:47px;background:#efefef;"></div>
<div class="r" style="left:849px;top:603px;width:1px;height:47px;background:#efefef;"></div>
<div class="r" style="left:924px;top:603px;width:1px;height:47px;background:#efefef;"></div>
<div class="r" style="left:999px;top:603px;width:1px;height:47px;background:#efefef;"></div>
<div class="r" style="left:1074px;top:603px;width:1px;height:47px;background:#efefef;"></div>
<div class="r" style="left:1149px;top:603px;width:1px;height:47px;background:#efefef;"></div>
<div class="r" style="left:1224px;top:603px;width:1px;height:47px;background:#efefef;"></div>
<div class="r" style="left:1299px;top:603px;width:1px;height:47px;background:#efefef;"></div>
<div class="r" style="left:1374px;top:603px;width:1px;height:47px;background:#efefef;"></div>
<div class="r" style="left:1449px;top:603px;width:1px;height:47px;background:#efefef;"></div>
<div class="r" style="left:1524px;top:603px;width:1px;height:47px;background:#efefef;"></div>
<div class="r" style="left:1599px;top:603px;width:1px;height:47px;background:#efefef;"></div>
<div class="r" style="left:1674px;top:603px;width:1px;height:47px;background:#efefef;"></div>
<div class="r" style="left:314px;top:603px;width:1434px;height:1px;background:#efefef;"></div>
<div class="r" style="left:314px;top:626px;width:1434px;height:1px;background:#efefef;"></div>
<div class="r" style="left:314px;top:649px;width:1434px;height:1px;background:#efefef;"></div>
<div class="r" style="left:314px;top:672px;width:1px;height:207px;background:#efefef;"></div>
<div class="r" style="left:399px;top:672px;width:1px;height:207px;background:#efefef;"></div>
<div class="r" style="left:474px;top:672px;width:1px;height:207px;background:#efefef;"></div>
<div class="r" style="left:549px;top:672px;width:1px;height:207px;background:#efefef;"></div>
<div class="r" style="left:624px;top:672px;width:1px;height:207px;background:#efefef;"></div>
<div class="r" style="left:699px;top:672px;width:1px;height:207px;background:#efefef;"></div>
<div class="r" style="left:774px;top:672px;width:1px;height:207px;background:#efefef;"></div>
<div class="r" style="left:849px;top:672px;width:1px;height:207px;background:#efefef;"></div>
<div class="r" style="left:924px;top:672px;width:1px;height:207px;background:#efefef;"></div>
<div class="r" style="left:999px;top:672px;width:1px;height:207px;background:#efefef;"></div>
<div class="r" style="left:1074px;top:672px;width:1px;height:207px;background:#efefef;"></div>
<div class="r" style="left:1149px;top:672px;width:1px;height:207px;background:#efefef;"></div>
<div class="r" style="left:1224px;top:672px;width:1px;height:207px;background:#efefef;"></div>
<div class="r" style="left:1299px;top:672px;width:1px;height:207px;background:#efefef;"></div>
<div class="r" style="left:1374px;top:672px;width:1px;height:207px;background:#efefef;"></div>
<div class="r" style="left:1449px;top:672px;width:1px;height:207px;background:#efefef;"></div>
<div class="r" style="left:1524px;top:672px;width:1px;height:207px;background:#efefef;"></div>
<div class="r" style="left:1599px;top:672px;width:1px;height:207px;background:#efefef;"></div>
<div class="r" style="left:1674px;top:672px;width:1px;height:207px;background:#efefef;"></div>
<div class="r" style="left:314px;top:672px;width:1434px;height:1px;background:#efefef;"></div>
<div class="r" style="left:314px;top:695px;width:1434px;height:1px;background:#efefef;"></div>
<div class="r" style="left:314px;top:718px;width:1434px;height:1px;background:#efefef;"></div>
<div class="r" style="left:314px;top:741px;width:1434px;height:1px;background:#efefef;"></div>
<div class="r" style="left:314px;top:764px;width:1434px;height:1px;background:#efefef;"></div>
<div class="r" style="left:314px;top:787px;width:1434px;height:1px;background:#efefef;"></div>
<div class="r" style="left:314px;top:810px;width:1434px;height:1px;background:#efefef;"></div>
<div class="r" style="left:314px;top:833px;width:1434px;height:1px;background:#efefef;"></div>
<div class="r" style="left:314px;top:856px;width:1434px;height:1px;background:#efefef;"></div>
<div class="r" style="left:314px;top:258px;width:1434px;height:1px;background:#000;"></div>
<div class="r" style="left:314px;top:442px;width:1434px;height:1px;background:#000;"></div>
<div class="r" style="left:314px;top:695px;width:1434px;height:1px;background:#000;"></div>
<div class="t" style="left:315px;top:236.06px;font-size:16px;line-height:24px;color:#000;width:84px;text-align:center;">10,375</div>
<div class="t" style="left:400px;top:236.06px;font-size:16px;line-height:24px;color:#000;width:74px;text-align:center;">10,400</div>
<div class="t" style="left:475px;top:236.06px;font-size:16px;line-height:24px;color:#000;width:74px;text-align:center;">9,420</div>
<div class="t" style="left:550px;top:236.06px;font-size:16px;line-height:24px;color:#000;width:74px;text-align:center;">10,135</div>
<div class="t" style="left:625px;top:236.06px;font-size:16px;line-height:24px;color:#000;width:74px;text-align:center;">10,450</div>
<div class="t" style="left:700px;top:236.06px;font-size:16px;line-height:24px;color:#000;width:74px;text-align:center;">10,400</div>
<div class="t" style="left:775px;top:236.06px;font-size:16px;line-height:24px;color:#000;width:74px;text-align:center;">10,385</div>
<div class="t" style="left:850px;top:236.06px;font-size:16px;line-height:24px;color:#000;width:74px;text-align:center;">10,400</div>
<div class="t" style="left:925px;top:236.06px;font-size:16px;line-height:24px;color:#000;width:74px;text-align:center;">10,385</div>
<div class="t" style="left:1000px;top:236.06px;font-size:16px;line-height:24px;color:#000;width:74px;text-align:center;">10,390</div>
<div class="t" style="left:1075px;top:236.06px;font-size:16px;line-height:24px;color:#000;width:74px;text-align:center;">10,485</div>
<div class="t" style="left:1150px;top:236.06px;font-size:16px;line-height:24px;color:#000;width:74px;text-align:center;">10,385</div>
<div class="t" style="left:1225px;top:236.06px;font-size:16px;line-height:24px;color:#000;width:74px;text-align:center;">10,485</div>
<div class="t" style="left:1300px;top:236.06px;font-size:16px;line-height:24px;color:#000;width:74px;text-align:center;">10,385</div>
<div class="t" style="left:1375px;top:236.06px;font-size:16px;line-height:24px;color:#000;width:74px;text-align:center;">10,485</div>
<div class="t" style="left:1450px;top:236.06px;font-size:16px;line-height:24px;color:#000;width:74px;text-align:center;">10,385</div>
<div class="t" style="left:1525px;top:236.06px;font-size:16px;line-height:24px;color:#000;width:74px;text-align:center;">10,485</div>
<div class="t" style="left:1600px;top:236.06px;font-size:16px;line-height:24px;color:#000;width:74px;text-align:center;">10,385</div>
<div class="t" style="left:1675px;top:236.06px;font-size:16px;line-height:24px;color:#000;width:74px;text-align:center;">10,380</div>
<div class="t" style="left:315px;top:259.06px;font-size:16px;line-height:24px;color:#000;width:84px;text-align:center;">9,000</div>
<div class="t" style="left:400px;top:259.06px;font-size:16px;line-height:24px;color:#000;width:74px;text-align:center;">9,015</div>
<div class="t" style="left:475px;top:259.06px;font-size:16px;line-height:24px;color:#000;width:74px;text-align:center;">8,010</div>
<div class="t" style="left:550px;top:259.06px;font-size:16px;line-height:24px;color:#000;width:74px;text-align:center;">8,750</div>
<div class="t" style="left:625px;top:259.06px;font-size:16px;line-height:24px;color:#000;width:74px;text-align:center;">9,015</div>
<div class="t" style="left:700px;top:259.06px;font-size:16px;line-height:24px;color:#000;width:74px;text-align:center;">9,015</div>
<div class="t" style="left:775px;top:259.06px;font-size:16px;line-height:24px;color:#000;width:74px;text-align:center;">9,000</div>
<div class="t" style="left:850px;top:259.06px;font-size:16px;line-height:24px;color:#000;width:74px;text-align:center;">9,015</div>
<div class="t" style="left:925px;top:259.06px;font-size:16px;line-height:24px;color:#000;width:74px;text-align:center;">9,000</div>
<div class="t" style="left:1000px;top:259.06px;font-size:16px;line-height:24px;color:#000;width:74px;text-align:center;">9,005</div>
<div class="t" style="left:1075px;top:259.06px;font-size:16px;line-height:24px;color:#000;width:74px;text-align:center;">9,100</div>
<div class="t" style="left:1150px;top:259.06px;font-size:16px;line-height:24px;color:#000;width:74px;text-align:center;">9,000</div>
<div class="t" style="left:1225px;top:259.06px;font-size:16px;line-height:24px;color:#000;width:74px;text-align:center;">9,100</div>
<div class="t" style="left:1300px;top:259.06px;font-size:16px;line-height:24px;color:#000;width:74px;text-align:center;">9,000</div>
<div class="t" style="left:1375px;top:259.06px;font-size:16px;line-height:24px;color:#000;width:74px;text-align:center;">9,100</div>
<div class="t" style="left:1450px;top:259.06px;font-size:16px;line-height:24px;color:#000;width:74px;text-align:center;">9,000</div>
<div class="t" style="left:1525px;top:259.06px;font-size:16px;line-height:24px;color:#000;width:74px;text-align:center;">9,100</div>
<div class="t" style="left:1600px;top:259.06px;font-size:16px;line-height:24px;color:#000;width:74px;text-align:center;">9,000</div>
<div class="t" style="left:1675px;top:259.06px;font-size:16px;line-height:24px;color:#000;width:74px;text-align:center;">8,995</div>
<div class="t" style="left:315px;top:282.06px;font-size:16px;line-height:24px;color:#000;width:84px;text-align:center;">700</div>
<div class="t" style="left:400px;top:282.06px;font-size:16px;line-height:24px;color:#000;width:74px;text-align:center;">710</div>
<div class="t" style="left:475px;top:282.06px;font-size:16px;line-height:24px;color:#000;width:74px;text-align:center;">725</div>
<div class="t" style="left:550px;top:282.06px;font-size:16px;line-height:24px;color:#000;width:74px;text-align:center;">710</div>
<div class="t" style="left:625px;top:282.06px;font-size:16px;line-height:24px;color:#000;width:74px;text-align:center;">760</div>
<div class="t" style="left:700px;top:282.06px;font-size:16px;line-height:24px;color:#000;width:74px;text-align:center;">710</div>
<div class="t" style="left:775px;top:282.06px;font-size:16px;line-height:24px;color:#000;width:74px;text-align:center;">710</div>
<div class="t" style="left:850px;top:282.06px;font-size:16px;line-height:24px;color:#000;width:74px;text-align:center;">710</div>
<div class="t" style="left:925px;top:282.06px;font-size:16px;line-height:24px;color:#000;width:74px;text-align:center;">710</div>
<div class="t" style="left:1000px;top:282.06px;font-size:16px;line-height:24px;color:#000;width:74px;text-align:center;">710</div>
<div class="t" style="left:1075px;top:282.06px;font-size:16px;line-height:24px;color:#000;width:74px;text-align:center;">710</div>
<div class="t" style="left:1150px;top:282.06px;font-size:16px;line-height:24px;color:#000;width:74px;text-align:center;">710</div>
<div class="t" style="left:1225px;top:282.06px;font-size:16px;line-height:24px;color:#000;width:74px;text-align:center;">710</div>
<div class="t" style="left:1300px;top:282.06px;font-size:16px;line-height:24px;color:#000;width:74px;text-align:center;">710</div>
<div class="t" style="left:1375px;top:282.06px;font-size:16px;line-height:24px;color:#000;width:74px;text-align:center;">710</div>
<div class="t" style="left:1450px;top:282.06px;font-size:16px;line-height:24px;color:#000;width:74px;text-align:center;">710</div>
<div class="t" style="left:1525px;top:282.06px;font-size:16px;line-height:24px;color:#000;width:74px;text-align:center;">710</div>
<div class="t" style="left:1600px;top:282.06px;font-size:16px;line-height:24px;color:#000;width:74px;text-align:center;">710</div>
<div class="t" style="left:1675px;top:282.06px;font-size:16px;line-height:24px;color:#000;width:74px;text-align:center;">710</div>
<div class="t" style="left:315px;top:305.06px;font-size:16px;line-height:24px;color:#000;width:84px;text-align:center;">250</div>
<div class="t" style="left:400px;top:305.06px;font-size:16px;line-height:24px;color:#000;width:74px;text-align:center;">250</div>
<div class="t" style="left:475px;top:305.06px;font-size:16px;line-height:24px;color:#000;width:74px;text-align:center;">260</div>
<div class="t" style="left:550px;top:305.06px;font-size:16px;line-height:24px;color:#000;width:74px;text-align:center;">250</div>
<div class="t" style="left:625px;top:305.06px;font-size:16px;line-height:24px;color:#000;width:74px;text-align:center;">250</div>
<div class="t" style="left:700px;top:305.06px;font-size:16px;line-height:24px;color:#000;width:74px;text-align:center;">250</div>
<div class="t" style="left:775px;top:305.06px;font-size:16px;line-height:24px;color:#000;width:74px;text-align:center;">250</div>
<div class="t" style="left:850px;top:305.06px;font-size:16px;line-height:24px;color:#000;width:74px;text-align:center;">250</div>
<div class="t" style="left:925px;top:305.06px;font-size:16px;line-height:24px;color:#000;width:74px;text-align:center;">250</div>
<div class="t" style="left:1000px;top:305.06px;font-size:16px;line-height:24px;color:#000;width:74px;text-align:center;">250</div>
<div class="t" style="left:1075px;top:305.06px;font-size:16px;line-height:24px;color:#000;width:74px;text-align:center;">250</div>
<div class="t" style="left:1150px;top:305.06px;font-size:16px;line-height:24px;color:#000;width:74px;text-align:center;">250</div>
<div class="t" style="left:1225px;top:305.06px;font-size:16px;line-height:24px;color:#000;width:74px;text-align:center;">250</div>
<div class="t" style="left:1300px;top:305.06px;font-size:16px;line-height:24px;color:#000;width:74px;text-align:center;">250</div>
<div class="t" style="left:1375px;top:305.06px;font-size:16px;line-height:24px;color:#000;width:74px;text-align:center;">250</div>
<div class="t" style="left:1450px;top:305.06px;font-size:16px;line-height:24px;color:#000;width:74px;text-align:center;">250</div>
<div class="t" style="left:1525px;top:305.06px;font-size:16px;line-height:24px;color:#000;width:74px;text-align:center;">250</div>
<div class="t" style="left:1600px;top:305.06px;font-size:16px;line-height:24px;color:#000;width:74px;text-align:center;">250</div>
<div class="t" style="left:1675px;top:305.06px;font-size:16px;line-height:24px;color:#000;width:74px;text-align:center;">250</div>
<div class="t" style="left:315px;top:328.06px;font-size:16px;line-height:24px;color:#000;width:84px;text-align:center;">200</div>
<div class="t" style="left:400px;top:328.06px;font-size:16px;line-height:24px;color:#000;width:74px;text-align:center;">200</div>
<div class="t" style="left:475px;top:328.06px;font-size:16px;line-height:24px;color:#000;width:74px;text-align:center;">200</div>
<div class="t" style="left:550px;top:328.06px;font-size:16px;line-height:24px;color:#000;width:74px;text-align:center;">200</div>
<div class="t" style="left:625px;top:328.06px;font-size:16px;line-height:24px;color:#000;width:74px;text-align:center;">200</div>
<div class="t" style="left:700px;top:328.06px;font-size:16px;line-height:24px;color:#000;width:74px;text-align:center;">200</div>
<div class="t" style="left:775px;top:328.06px;font-size:16px;line-height:24px;color:#000;width:74px;text-align:center;">200</div>
<div class="t" style="left:850px;top:328.06px;font-size:16px;line-height:24px;color:#000;width:74px;text-align:center;">200</div>
<div class="t" style="left:925px;top:328.06px;font-size:16px;line-height:24px;color:#000;width:74px;text-align:center;">200</div>
<div class="t" style="left:1000px;top:328.06px;font-size:16px;line-height:24px;color:#000;width:74px;text-align:center;">200</div>
<div class="t" style="left:1075px;top:328.06px;font-size:16px;line-height:24px;color:#000;width:74px;text-align:center;">200</div>
<div class="t" style="left:1150px;top:328.06px;font-size:16px;line-height:24px;color:#000;width:74px;text-align:center;">200</div>
<div class="t" style="left:1225px;top:328.06px;font-size:16px;line-height:24px;color:#000;width:74px;text-align:center;">200</div>
<div class="t" style="left:1300px;top:328.06px;font-size:16px;line-height:24px;color:#000;width:74px;text-align:center;">200</div>
<div class="t" style="left:1375px;top:328.06px;font-size:16px;line-height:24px;color:#000;width:74px;text-align:center;">200</div>
<div class="t" style="left:1450px;top:328.06px;font-size:16px;line-height:24px;color:#000;width:74px;text-align:center;">200</div>
<div class="t" style="left:1525px;top:328.06px;font-size:16px;line-height:24px;color:#000;width:74px;text-align:center;">200</div>
<div class="t" style="left:1600px;top:328.06px;font-size:16px;line-height:24px;color:#000;width:74px;text-align:center;">200</div>
<div class="t" style="left:1675px;top:328.06px;font-size:16px;line-height:24px;color:#000;width:74px;text-align:center;">200</div>
<div class="t" style="left:315px;top:351.06px;font-size:16px;line-height:24px;color:#000;width:84px;text-align:center;">125</div>
<div class="t" style="left:400px;top:351.06px;font-size:16px;line-height:24px;color:#000;width:74px;text-align:center;">125</div>
<div class="t" style="left:475px;top:351.06px;font-size:16px;line-height:24px;color:#000;width:74px;text-align:center;">125</div>
<div class="t" style="left:550px;top:351.06px;font-size:16px;line-height:24px;color:#000;width:74px;text-align:center;">125</div>
<div class="t" style="left:625px;top:351.06px;font-size:16px;line-height:24px;color:#000;width:74px;text-align:center;">125</div>
<div class="t" style="left:700px;top:351.06px;font-size:16px;line-height:24px;color:#000;width:74px;text-align:center;">125</div>
<div class="t" style="left:775px;top:351.06px;font-size:16px;line-height:24px;color:#000;width:74px;text-align:center;">125</div>
<div class="t" style="left:850px;top:351.06px;font-size:16px;line-height:24px;color:#000;width:74px;text-align:center;">125</div>
<div class="t" style="left:925px;top:351.06px;font-size:16px;line-height:24px;color:#000;width:74px;text-align:center;">125</div>
<div class="t" style="left:1000px;top:351.06px;font-size:16px;line-height:24px;color:#000;width:74px;text-align:center;">125</div>
<div class="t" style="left:1075px;top:351.06px;font-size:16px;line-height:24px;color:#000;width:74px;text-align:center;">125</div>
<div class="t" style="left:1150px;top:351.06px;font-size:16px;line-height:24px;color:#000;width:74px;text-align:center;">125</div>
<div class="t" style="left:1225px;top:351.06px;font-size:16px;line-height:24px;color:#000;width:74px;text-align:center;">125</div>
<div class="t" style="left:1300px;top:351.06px;font-size:16px;line-height:24px;color:#000;width:74px;text-align:center;">125</div>
<div class="t" style="left:1375px;top:351.06px;font-size:16px;line-height:24px;color:#000;width:74px;text-align:center;">125</div>
<div class="t" style="left:1450px;top:351.06px;font-size:16px;line-height:24px;color:#000;width:74px;text-align:center;">125</div>
<div class="t" style="left:1525px;top:351.06px;font-size:16px;line-height:24px;color:#000;width:74px;text-align:center;">125</div>
<div class="t" style="left:1600px;top:351.06px;font-size:16px;line-height:24px;color:#000;width:74px;text-align:center;">125</div>
<div class="t" style="left:1675px;top:351.06px;font-size:16px;line-height:24px;color:#000;width:74px;text-align:center;">125</div>
<div class="t" style="left:315px;top:374.06px;font-size:16px;line-height:24px;color:#000;width:84px;text-align:center;">100</div>
<div class="t" style="left:400px;top:374.06px;font-size:16px;line-height:24px;color:#000;width:74px;text-align:center;">100</div>
<div class="t" style="left:475px;top:374.06px;font-size:16px;line-height:24px;color:#000;width:74px;text-align:center;">100</div>
<div class="t" style="left:550px;top:374.06px;font-size:16px;line-height:24px;color:#000;width:74px;text-align:center;">100</div>
<div class="t" style="left:625px;top:374.06px;font-size:16px;line-height:24px;color:#000;width:74px;text-align:center;">100</div>
<div class="t" style="left:700px;top:374.06px;font-size:16px;line-height:24px;color:#000;width:74px;text-align:center;">100</div>
<div class="t" style="left:775px;top:374.06px;font-size:16px;line-height:24px;color:#000;width:74px;text-align:center;">100</div>
<div class="t" style="left:850px;top:374.06px;font-size:16px;line-height:24px;color:#000;width:74px;text-align:center;">100</div>
<div class="t" style="left:925px;top:374.06px;font-size:16px;line-height:24px;color:#000;width:74px;text-align:center;">100</div>
<div class="t" style="left:1000px;top:374.06px;font-size:16px;line-height:24px;color:#000;width:74px;text-align:center;">100</div>
<div class="t" style="left:1075px;top:374.06px;font-size:16px;line-height:24px;color:#000;width:74px;text-align:center;">100</div>
<div class="t" style="left:1150px;top:374.06px;font-size:16px;line-height:24px;color:#000;width:74px;text-align:center;">100</div>
<div class="t" style="left:1225px;top:374.06px;font-size:16px;line-height:24px;color:#000;width:74px;text-align:center;">100</div>
<div class="t" style="left:1300px;top:374.06px;font-size:16px;line-height:24px;color:#000;width:74px;text-align:center;">100</div>
<div class="t" style="left:1375px;top:374.06px;font-size:16px;line-height:24px;color:#000;width:74px;text-align:center;">100</div>
<div class="t" style="left:1450px;top:374.06px;font-size:16px;line-height:24px;color:#000;width:74px;text-align:center;">100</div>
<div class="t" style="left:1525px;top:374.06px;font-size:16px;line-height:24px;color:#000;width:74px;text-align:center;">100</div>
<div class="t" style="left:1600px;top:374.06px;font-size:16px;line-height:24px;color:#000;width:74px;text-align:center;">100</div>
<div class="t" style="left:1675px;top:374.06px;font-size:16px;line-height:24px;color:#000;width:74px;text-align:center;">100</div>
<div class="t" style="left:315px;top:420.06px;font-size:16px;line-height:24px;color:#000;width:84px;text-align:center;">-2,040</div>
<div class="t" style="left:400px;top:420.06px;font-size:16px;line-height:24px;color:#000;width:74px;text-align:center;">-1,940</div>
<div class="t" style="left:475px;top:420.06px;font-size:16px;line-height:24px;color:#000;width:74px;text-align:center;">-2,040</div>
<div class="t" style="left:550px;top:420.06px;font-size:16px;line-height:24px;color:#000;width:74px;text-align:center;">-1,940</div>
<div class="t" style="left:625px;top:420.06px;font-size:16px;line-height:24px;color:#000;width:74px;text-align:center;">-2,040</div>
<div class="t" style="left:700px;top:420.06px;font-size:16px;line-height:24px;color:#000;width:74px;text-align:center;">-1,940</div>
<div class="t" style="left:775px;top:420.06px;font-size:16px;line-height:24px;color:#000;width:74px;text-align:center;">-2,040</div>
<div class="t" style="left:850px;top:420.06px;font-size:16px;line-height:24px;color:#000;width:74px;text-align:center;">-1,940</div>
<div class="t" style="left:925px;top:420.06px;font-size:16px;line-height:24px;color:#000;width:74px;text-align:center;">-2,040</div>
<div class="t" style="left:1000px;top:420.06px;font-size:16px;line-height:24px;color:#000;width:74px;text-align:center;">-2,045</div>
<div class="t" style="left:1075px;top:420.06px;font-size:16px;line-height:24px;color:#000;width:74px;text-align:center;">-2,040</div>
<div class="t" style="left:1150px;top:420.06px;font-size:16px;line-height:24px;color:#000;width:74px;text-align:center;">-2,045</div>
<div class="t" style="left:1225px;top:420.06px;font-size:16px;line-height:24px;color:#000;width:74px;text-align:center;">-2,040</div>
<div class="t" style="left:1300px;top:420.06px;font-size:16px;line-height:24px;color:#000;width:74px;text-align:center;">-1,890</div>
<div class="t" style="left:1375px;top:420.06px;font-size:16px;line-height:24px;color:#000;width:74px;text-align:center;">-2,090</div>
<div class="t" style="left:1450px;top:420.06px;font-size:16px;line-height:24px;color:#000;width:74px;text-align:center;">-2,040</div>
<div class="t" style="left:1525px;top:420.06px;font-size:16px;line-height:24px;color:#000;width:74px;text-align:center;">-2,040</div>
<div class="t" style="left:1600px;top:420.06px;font-size:16px;line-height:24px;color:#000;width:74px;text-align:center;">-2,040</div>
<div class="t" style="left:1675px;top:420.06px;font-size:16px;line-height:24px;color:#000;width:74px;text-align:center;">-2,090</div>
<div class="t" style="left:315px;top:443.06px;font-size:16px;line-height:24px;color:#000;width:84px;text-align:center;">-1,550</div>
<div class="t" style="left:400px;top:443.06px;font-size:16px;line-height:24px;color:#000;width:74px;text-align:center;">-1,450</div>
<div class="t" style="left:475px;top:443.06px;font-size:16px;line-height:24px;color:#000;width:74px;text-align:center;">-1,550</div>
<div class="t" style="left:550px;top:443.06px;font-size:16px;line-height:24px;color:#000;width:74px;text-align:center;">-1,450</div>
<div class="t" style="left:625px;top:443.06px;font-size:16px;line-height:24px;color:#000;width:74px;text-align:center;">-1,550</div>
<div class="t" style="left:700px;top:443.06px;font-size:16px;line-height:24px;color:#000;width:74px;text-align:center;">-1,450</div>
<div class="t" style="left:775px;top:443.06px;font-size:16px;line-height:24px;color:#000;width:74px;text-align:center;">-1,550</div>
<div class="t" style="left:850px;top:443.06px;font-size:16px;line-height:24px;color:#000;width:74px;text-align:center;">-1,450</div>
<div class="t" style="left:925px;top:443.06px;font-size:16px;line-height:24px;color:#000;width:74px;text-align:center;">-1,550</div>
<div class="t" style="left:1000px;top:443.06px;font-size:16px;line-height:24px;color:#000;width:74px;text-align:center;">-1,555</div>
<div class="t" style="left:1075px;top:443.06px;font-size:16px;line-height:24px;color:#000;width:74px;text-align:center;">-1,550</div>
<div class="t" style="left:1150px;top:443.06px;font-size:16px;line-height:24px;color:#000;width:74px;text-align:center;">-1,555</div>
<div class="t" style="left:1225px;top:443.06px;font-size:16px;line-height:24px;color:#000;width:74px;text-align:center;">-1,550</div>
<div class="t" style="left:1300px;top:443.06px;font-size:16px;line-height:24px;color:#000;width:74px;text-align:center;">-1,400</div>
<div class="t" style="left:1375px;top:443.06px;font-size:16px;line-height:24px;color:#000;width:74px;text-align:center;">-1,600</div>
<div class="t" style="left:1450px;top:443.06px;font-size:16px;line-height:24px;color:#000;width:74px;text-align:center;">-1,550</div>
<div class="t" style="left:1525px;top:443.06px;font-size:16px;line-height:24px;color:#000;width:74px;text-align:center;">-1,550</div>
<div class="t" style="left:1600px;top:443.06px;font-size:16px;line-height:24px;color:#000;width:74px;text-align:center;">-1,550</div>
<div class="t" style="left:1675px;top:443.06px;font-size:16px;line-height:24px;color:#000;width:74px;text-align:center;">-1,600</div>
<div class="t" style="left:315px;top:466.06px;font-size:16px;line-height:24px;color:#000;width:84px;text-align:center;">-225</div>
<div class="t" style="left:400px;top:466.06px;font-size:16px;line-height:24px;color:#000;width:74px;text-align:center;">-225</div>
<div class="t" style="left:475px;top:466.06px;font-size:16px;line-height:24px;color:#000;width:74px;text-align:center;">-225</div>
<div class="t" style="left:550px;top:466.06px;font-size:16px;line-height:24px;color:#000;width:74px;text-align:center;">-225</div>
<div class="t" style="left:625px;top:466.06px;font-size:16px;line-height:24px;color:#000;width:74px;text-align:center;">-225</div>
<div class="t" style="left:700px;top:466.06px;font-size:16px;line-height:24px;color:#000;width:74px;text-align:center;">-225</div>
<div class="t" style="left:775px;top:466.06px;font-size:16px;line-height:24px;color:#000;width:74px;text-align:center;">-225</div>
<div class="t" style="left:850px;top:466.06px;font-size:16px;line-height:24px;color:#000;width:74px;text-align:center;">-225</div>
<div class="t" style="left:925px;top:466.06px;font-size:16px;line-height:24px;color:#000;width:74px;text-align:center;">-225</div>
<div class="t" style="left:1000px;top:466.06px;font-size:16px;line-height:24px;color:#000;width:74px;text-align:center;">-225</div>
<div class="t" style="left:1075px;top:466.06px;font-size:16px;line-height:24px;color:#000;width:74px;text-align:center;">-225</div>
<div class="t" style="left:1150px;top:466.06px;font-size:16px;line-height:24px;color:#000;width:74px;text-align:center;">-225</div>
<div class="t" style="left:1225px;top:466.06px;font-size:16px;line-height:24px;color:#000;width:74px;text-align:center;">-225</div>
<div class="t" style="left:1300px;top:466.06px;font-size:16px;line-height:24px;color:#000;width:74px;text-align:center;">-225</div>
<div class="t" style="left:1375px;top:466.06px;font-size:16px;line-height:24px;color:#000;width:74px;text-align:center;">-225</div>
<div class="t" style="left:1450px;top:466.06px;font-size:16px;line-height:24px;color:#000;width:74px;text-align:center;">-225</div>
<div class="t" style="left:1525px;top:466.06px;font-size:16px;line-height:24px;color:#000;width:74px;text-align:center;">-225</div>
<div class="t" style="left:1600px;top:466.06px;font-size:16px;line-height:24px;color:#000;width:74px;text-align:center;">-225</div>
<div class="t" style="left:1675px;top:466.06px;font-size:16px;line-height:24px;color:#000;width:74px;text-align:center;">-225</div>
<div class="t" style="left:315px;top:489.06px;font-size:16px;line-height:24px;color:#000;width:84px;text-align:center;">-75</div>
<div class="t" style="left:400px;top:489.06px;font-size:16px;line-height:24px;color:#000;width:74px;text-align:center;">-75</div>
<div class="t" style="left:475px;top:489.06px;font-size:16px;line-height:24px;color:#000;width:74px;text-align:center;">-75</div>
<div class="t" style="left:550px;top:489.06px;font-size:16px;line-height:24px;color:#000;width:74px;text-align:center;">-75</div>
<div class="t" style="left:625px;top:489.06px;font-size:16px;line-height:24px;color:#000;width:74px;text-align:center;">-75</div>
<div class="t" style="left:700px;top:489.06px;font-size:16px;line-height:24px;color:#000;width:74px;text-align:center;">-75</div>
<div class="t" style="left:775px;top:489.06px;font-size:16px;line-height:24px;color:#000;width:74px;text-align:center;">-75</div>
<div class="t" style="left:850px;top:489.06px;font-size:16px;line-height:24px;color:#000;width:74px;text-align:center;">-75</div>
<div class="t" style="left:925px;top:489.06px;font-size:16px;line-height:24px;color:#000;width:74px;text-align:center;">-75</div>
<div class="t" style="left:1000px;top:489.06px;font-size:16px;line-height:24px;color:#000;width:74px;text-align:center;">-75</div>
<div class="t" style="left:1075px;top:489.06px;font-size:16px;line-height:24px;color:#000;width:74px;text-align:center;">-75</div>
<div class="t" style="left:1150px;top:489.06px;font-size:16px;line-height:24px;color:#000;width:74px;text-align:center;">-75</div>
<div class="t" style="left:1225px;top:489.06px;font-size:16px;line-height:24px;color:#000;width:74px;text-align:center;">-75</div>
<div class="t" style="left:1300px;top:489.06px;font-size:16px;line-height:24px;color:#000;width:74px;text-align:center;">-75</div>
<div class="t" style="left:1375px;top:489.06px;font-size:16px;line-height:24px;color:#000;width:74px;text-align:center;">-75</div>
<div class="t" style="left:1450px;top:489.06px;font-size:16px;line-height:24px;color:#000;width:74px;text-align:center;">-75</div>
<div class="t" style="left:1525px;top:489.06px;font-size:16px;line-height:24px;color:#000;width:74px;text-align:center;">-75</div>
<div class="t" style="left:1600px;top:489.06px;font-size:16px;line-height:24px;color:#000;width:74px;text-align:center;">-75</div>
<div class="t" style="left:1675px;top:489.06px;font-size:16px;line-height:24px;color:#000;width:74px;text-align:center;">-75</div>
<div class="t" style="left:315px;top:512.06px;font-size:16px;line-height:24px;color:#000;width:84px;text-align:center;">-75</div>
<div class="t" style="left:400px;top:512.06px;font-size:16px;line-height:24px;color:#000;width:74px;text-align:center;">-75</div>
<div class="t" style="left:475px;top:512.06px;font-size:16px;line-height:24px;color:#000;width:74px;text-align:center;">-75</div>
<div class="t" style="left:550px;top:512.06px;font-size:16px;line-height:24px;color:#000;width:74px;text-align:center;">-75</div>
<div class="t" style="left:625px;top:512.06px;font-size:16px;line-height:24px;color:#000;width:74px;text-align:center;">-75</div>
<div class="t" style="left:700px;top:512.06px;font-size:16px;line-height:24px;color:#000;width:74px;text-align:center;">-75</div>
<div class="t" style="left:775px;top:512.06px;font-size:16px;line-height:24px;color:#000;width:74px;text-align:center;">-75</div>
<div class="t" style="left:850px;top:512.06px;font-size:16px;line-height:24px;color:#000;width:74px;text-align:center;">-75</div>
<div class="t" style="left:925px;top:512.06px;font-size:16px;line-height:24px;color:#000;width:74px;text-align:center;">-75</div>
<div class="t" style="left:1000px;top:512.06px;font-size:16px;line-height:24px;color:#000;width:74px;text-align:center;">-75</div>
<div class="t" style="left:1075px;top:512.06px;font-size:16px;line-height:24px;color:#000;width:74px;text-align:center;">-75</div>
<div class="t" style="left:1150px;top:512.06px;font-size:16px;line-height:24px;color:#000;width:74px;text-align:center;">-75</div>
<div class="t" style="left:1225px;top:512.06px;font-size:16px;line-height:24px;color:#000;width:74px;text-align:center;">-75</div>
<div class="t" style="left:1300px;top:512.06px;font-size:16px;line-height:24px;color:#000;width:74px;text-align:center;">-75</div>
<div class="t" style="left:1375px;top:512.06px;font-size:16px;line-height:24px;color:#000;width:74px;text-align:center;">-75</div>
<div class="t" style="left:1450px;top:512.06px;font-size:16px;line-height:24px;color:#000;width:74px;text-align:center;">-75</div>
<div class="t" style="left:1525px;top:512.06px;font-size:16px;line-height:24px;color:#000;width:74px;text-align:center;">-75</div>
<div class="t" style="left:1600px;top:512.06px;font-size:16px;line-height:24px;color:#000;width:74px;text-align:center;">-75</div>
<div class="t" style="left:1675px;top:512.06px;font-size:16px;line-height:24px;color:#000;width:74px;text-align:center;">-75</div>
<div class="t" style="left:315px;top:535.06px;font-size:16px;line-height:24px;color:#000;width:84px;text-align:center;">-65</div>
<div class="t" style="left:400px;top:535.06px;font-size:16px;line-height:24px;color:#000;width:74px;text-align:center;">-65</div>
<div class="t" style="left:475px;top:535.06px;font-size:16px;line-height:24px;color:#000;width:74px;text-align:center;">-65</div>
<div class="t" style="left:550px;top:535.06px;font-size:16px;line-height:24px;color:#000;width:74px;text-align:center;">-65</div>
<div class="t" style="left:625px;top:535.06px;font-size:16px;line-height:24px;color:#000;width:74px;text-align:center;">-65</div>
<div class="t" style="left:700px;top:535.06px;font-size:16px;line-height:24px;color:#000;width:74px;text-align:center;">-65</div>
<div class="t" style="left:775px;top:535.06px;font-size:16px;line-height:24px;color:#000;width:74px;text-align:center;">-65</div>
<div class="t" style="left:850px;top:535.06px;font-size:16px;line-height:24px;color:#000;width:74px;text-align:center;">-65</div>
<div class="t" style="left:925px;top:535.06px;font-size:16px;line-height:24px;color:#000;width:74px;text-align:center;">-65</div>
<div class="t" style="left:1000px;top:535.06px;font-size:16px;line-height:24px;color:#000;width:74px;text-align:center;">-65</div>
<div class="t" style="left:1075px;top:535.06px;font-size:16px;line-height:24px;color:#000;width:74px;text-align:center;">-65</div>
<div class="t" style="left:1150px;top:535.06px;font-size:16px;line-height:24px;color:#000;width:74px;text-align:center;">-65</div>
<div class="t" style="left:1225px;top:535.06px;font-size:16px;line-height:24px;color:#000;width:74px;text-align:center;">-65</div>
<div class="t" style="left:1300px;top:535.06px;font-size:16px;line-height:24px;color:#000;width:74px;text-align:center;">-65</div>
<div class="t" style="left:1375px;top:535.06px;font-size:16px;line-height:24px;color:#000;width:74px;text-align:center;">-65</div>
<div class="t" style="left:1450px;top:535.06px;font-size:16px;line-height:24px;color:#000;width:74px;text-align:center;">-65</div>
<div class="t" style="left:1525px;top:535.06px;font-size:16px;line-height:24px;color:#000;width:74px;text-align:center;">-65</div>
<div class="t" style="left:1600px;top:535.06px;font-size:16px;line-height:24px;color:#000;width:74px;text-align:center;">-65</div>
<div class="t" style="left:1675px;top:535.06px;font-size:16px;line-height:24px;color:#000;width:74px;text-align:center;">-65</div>
<div class="t" style="left:315px;top:558.06px;font-size:16px;line-height:24px;color:#000;width:84px;text-align:center;">-50</div>
<div class="t" style="left:400px;top:558.06px;font-size:16px;line-height:24px;color:#000;width:74px;text-align:center;">-50</div>
<div class="t" style="left:475px;top:558.06px;font-size:16px;line-height:24px;color:#000;width:74px;text-align:center;">-50</div>
<div class="t" style="left:550px;top:558.06px;font-size:16px;line-height:24px;color:#000;width:74px;text-align:center;">-50</div>
<div class="t" style="left:625px;top:558.06px;font-size:16px;line-height:24px;color:#000;width:74px;text-align:center;">-50</div>
<div class="t" style="left:700px;top:558.06px;font-size:16px;line-height:24px;color:#000;width:74px;text-align:center;">-50</div>
<div class="t" style="left:775px;top:558.06px;font-size:16px;line-height:24px;color:#000;width:74px;text-align:center;">-50</div>
<div class="t" style="left:850px;top:558.06px;font-size:16px;line-height:24px;color:#000;width:74px;text-align:center;">-50</div>
<div class="t" style="left:925px;top:558.06px;font-size:16px;line-height:24px;color:#000;width:74px;text-align:center;">-50</div>
<div class="t" style="left:1000px;top:558.06px;font-size:16px;line-height:24px;color:#000;width:74px;text-align:center;">-50</div>
<div class="t" style="left:1075px;top:558.06px;font-size:16px;line-height:24px;color:#000;width:74px;text-align:center;">-50</div>
<div class="t" style="left:1150px;top:558.06px;font-size:16px;line-height:24px;color:#000;width:74px;text-align:center;">-50</div>
<div class="t" style="left:1225px;top:558.06px;font-size:16px;line-height:24px;color:#000;width:74px;text-align:center;">-50</div>
<div class="t" style="left:1300px;top:558.06px;font-size:16px;line-height:24px;color:#000;width:74px;text-align:center;">-50</div>
<div class="t" style="left:1375px;top:558.06px;font-size:16px;line-height:24px;color:#000;width:74px;text-align:center;">-50</div>
<div class="t" style="left:1450px;top:558.06px;font-size:16px;line-height:24px;color:#000;width:74px;text-align:center;">-50</div>
<div class="t" style="left:1525px;top:558.06px;font-size:16px;line-height:24px;color:#000;width:74px;text-align:center;">-50</div>
<div class="t" style="left:1600px;top:558.06px;font-size:16px;line-height:24px;color:#000;width:74px;text-align:center;">-50</div>
<div class="t" style="left:1675px;top:558.06px;font-size:16px;line-height:24px;color:#000;width:74px;text-align:center;">-50</div>
<div class="t" style="left:315px;top:604.06px;font-size:16px;line-height:24px;color:#000;width:84px;text-align:center;">12,415</div>
<div class="t" style="left:400px;top:604.06px;font-size:16px;line-height:24px;color:#000;width:74px;text-align:center;">12,340</div>
<div class="t" style="left:475px;top:604.06px;font-size:16px;line-height:24px;color:#000;width:74px;text-align:center;">11,460</div>
<div class="t" style="left:550px;top:604.06px;font-size:16px;line-height:24px;color:#000;width:74px;text-align:center;">12,075</div>
<div class="t" style="left:625px;top:604.06px;font-size:16px;line-height:24px;color:#000;width:74px;text-align:center;">12,490</div>
<div class="t" style="left:700px;top:604.06px;font-size:16px;line-height:24px;color:#000;width:74px;text-align:center;">12,340</div>
<div class="t" style="left:775px;top:604.06px;font-size:16px;line-height:24px;color:#000;width:74px;text-align:center;">12,425</div>
<div class="t" style="left:850px;top:604.06px;font-size:16px;line-height:24px;color:#000;width:74px;text-align:center;">12,340</div>
<div class="t" style="left:925px;top:604.06px;font-size:16px;line-height:24px;color:#000;width:74px;text-align:center;">12,425</div>
<div class="t" style="left:1000px;top:604.06px;font-size:16px;line-height:24px;color:#000;width:74px;text-align:center;">12,435</div>
<div class="t" style="left:1075px;top:604.06px;font-size:16px;line-height:24px;color:#000;width:74px;text-align:center;">12,525</div>
<div class="t" style="left:1150px;top:604.06px;font-size:16px;line-height:24px;color:#000;width:74px;text-align:center;">12,430</div>
<div class="t" style="left:1225px;top:604.06px;font-size:16px;line-height:24px;color:#000;width:74px;text-align:center;">12,525</div>
<div class="t" style="left:1300px;top:604.06px;font-size:16px;line-height:24px;color:#000;width:74px;text-align:center;">12,275</div>
<div class="t" style="left:1375px;top:604.06px;font-size:16px;line-height:24px;color:#000;width:74px;text-align:center;">12,575</div>
<div class="t" style="left:1450px;top:604.06px;font-size:16px;line-height:24px;color:#000;width:74px;text-align:center;">12,425</div>
<div class="t" style="left:1525px;top:604.06px;font-size:16px;line-height:24px;color:#000;width:74px;text-align:center;">12,525</div>
<div class="t" style="left:1600px;top:604.06px;font-size:16px;line-height:24px;color:#000;width:74px;text-align:center;">12,425</div>
<div class="t" style="left:1675px;top:604.06px;font-size:16px;line-height:24px;color:#000;width:74px;text-align:center;">12,470</div>
<div class="t" style="left:315px;top:627.06px;font-size:16px;line-height:24px;color:#000;width:84px;text-align:center;">-19.66%</div>
<div class="t" style="left:400px;top:627.06px;font-size:16px;line-height:24px;color:#000;width:74px;text-align:center;">-18.65%</div>
<div class="t" style="left:475px;top:627.06px;font-size:16px;line-height:24px;color:#000;width:74px;text-align:center;">-21.66%</div>
<div class="t" style="left:550px;top:627.06px;font-size:16px;line-height:24px;color:#000;width:74px;text-align:center;">-19.14%</div>
<div class="t" style="left:625px;top:627.06px;font-size:16px;line-height:24px;color:#000;width:74px;text-align:center;">-19.52%</div>
<div class="t" style="left:700px;top:627.06px;font-size:16px;line-height:24px;color:#000;width:74px;text-align:center;">-18.65%</div>
<div class="t" style="left:775px;top:627.06px;font-size:16px;line-height:24px;color:#000;width:74px;text-align:center;">-19.64%</div>
<div class="t" style="left:850px;top:627.06px;font-size:16px;line-height:24px;color:#000;width:74px;text-align:center;">-18.65%</div>
<div class="t" style="left:925px;top:627.06px;font-size:16px;line-height:24px;color:#000;width:74px;text-align:center;">-19.64%</div>
<div class="t" style="left:1000px;top:627.06px;font-size:16px;line-height:24px;color:#000;width:74px;text-align:center;">-19.68%</div>
<div class="t" style="left:1075px;top:627.06px;font-size:16px;line-height:24px;color:#000;width:74px;text-align:center;">-19.46%</div>
<div class="t" style="left:1150px;top:627.06px;font-size:16px;line-height:24px;color:#000;width:74px;text-align:center;">-19.69%</div>
<div class="t" style="left:1225px;top:627.06px;font-size:16px;line-height:24px;color:#000;width:74px;text-align:center;">-19.46%</div>
<div class="t" style="left:1300px;top:627.06px;font-size:16px;line-height:24px;color:#000;width:74px;text-align:center;">-18.20%</div>
<div class="t" style="left:1375px;top:627.06px;font-size:16px;line-height:24px;color:#000;width:74px;text-align:center;">-19.93%</div>
<div class="t" style="left:1450px;top:627.06px;font-size:16px;line-height:24px;color:#000;width:74px;text-align:center;">-19.64%</div>
<div class="t" style="left:1525px;top:627.06px;font-size:16px;line-height:24px;color:#000;width:74px;text-align:center;">-19.46%</div>
<div class="t" style="left:1600px;top:627.06px;font-size:16px;line-height:24px;color:#000;width:74px;text-align:center;">-19.64%</div>
<div class="t" style="left:1675px;top:627.06px;font-size:16px;line-height:24px;color:#000;width:74px;text-align:center;">-20.13%</div>
<div class="t" style="left:315px;top:673.06px;font-size:16px;line-height:24px;color:#000;width:84px;text-align:center;">-1255</div>
<div class="t" style="left:400px;top:673.06px;font-size:16px;line-height:24px;color:#000;width:74px;text-align:center;">-1240</div>
<div class="t" style="left:475px;top:673.06px;font-size:16px;line-height:24px;color:#000;width:74px;text-align:center;">-1255</div>
<div class="t" style="left:550px;top:673.06px;font-size:16px;line-height:24px;color:#000;width:74px;text-align:center;">-1240</div>
<div class="t" style="left:625px;top:673.06px;font-size:16px;line-height:24px;color:#000;width:74px;text-align:center;">-1255</div>
<div class="t" style="left:700px;top:673.06px;font-size:16px;line-height:24px;color:#000;width:74px;text-align:center;">-1265</div>
<div class="t" style="left:775px;top:673.06px;font-size:16px;line-height:24px;color:#000;width:74px;text-align:center;">-1280</div>
<div class="t" style="left:850px;top:673.06px;font-size:16px;line-height:24px;color:#000;width:74px;text-align:center;">-1255</div>
<div class="t" style="left:925px;top:673.06px;font-size:16px;line-height:24px;color:#000;width:74px;text-align:center;">-1305</div>
<div class="t" style="left:1000px;top:673.06px;font-size:16px;line-height:24px;color:#000;width:74px;text-align:center;">-1305</div>
<div class="t" style="left:1075px;top:673.06px;font-size:16px;line-height:24px;color:#000;width:74px;text-align:center;">-1235</div>
<div class="t" style="left:1150px;top:673.06px;font-size:16px;line-height:24px;color:#000;width:74px;text-align:center;">-1255</div>
<div class="t" style="left:1225px;top:673.06px;font-size:16px;line-height:24px;color:#000;width:74px;text-align:center;">-1280</div>
<div class="t" style="left:1300px;top:673.06px;font-size:16px;line-height:24px;color:#000;width:74px;text-align:center;">-1255</div>
<div class="t" style="left:1375px;top:673.06px;font-size:16px;line-height:24px;color:#000;width:74px;text-align:center;">-1290</div>
<div class="t" style="left:1450px;top:673.06px;font-size:16px;line-height:24px;color:#000;width:74px;text-align:center;">-1255</div>
<div class="t" style="left:1525px;top:673.06px;font-size:16px;line-height:24px;color:#000;width:74px;text-align:center;">-1235</div>
<div class="t" style="left:1600px;top:673.06px;font-size:16px;line-height:24px;color:#000;width:74px;text-align:center;">-1255</div>
<div class="t" style="left:1675px;top:673.06px;font-size:16px;line-height:24px;color:#000;width:74px;text-align:center;">-1265</div>
<div class="t" style="left:315px;top:696.06px;font-size:16px;line-height:24px;color:#000;width:84px;text-align:center;">-600</div>
<div class="t" style="left:400px;top:696.06px;font-size:16px;line-height:24px;color:#000;width:74px;text-align:center;">-585</div>
<div class="t" style="left:475px;top:696.06px;font-size:16px;line-height:24px;color:#000;width:74px;text-align:center;">-600</div>
<div class="t" style="left:550px;top:696.06px;font-size:16px;line-height:24px;color:#000;width:74px;text-align:center;">-585</div>
<div class="t" style="left:625px;top:696.06px;font-size:16px;line-height:24px;color:#000;width:74px;text-align:center;">-600</div>
<div class="t" style="left:700px;top:696.06px;font-size:16px;line-height:24px;color:#000;width:74px;text-align:center;">-610</div>
<div class="t" style="left:775px;top:696.06px;font-size:16px;line-height:24px;color:#000;width:74px;text-align:center;">-625</div>
<div class="t" style="left:850px;top:696.06px;font-size:16px;line-height:24px;color:#000;width:74px;text-align:center;">-600</div>
<div class="t" style="left:925px;top:696.06px;font-size:16px;line-height:24px;color:#000;width:74px;text-align:center;">-650</div>
<div class="t" style="left:1000px;top:696.06px;font-size:16px;line-height:24px;color:#000;width:74px;text-align:center;">-650</div>
<div class="t" style="left:1075px;top:696.06px;font-size:16px;line-height:24px;color:#000;width:74px;text-align:center;">-580</div>
<div class="t" style="left:1150px;top:696.06px;font-size:16px;line-height:24px;color:#000;width:74px;text-align:center;">-600</div>
<div class="t" style="left:1225px;top:696.06px;font-size:16px;line-height:24px;color:#000;width:74px;text-align:center;">-625</div>
<div class="t" style="left:1300px;top:696.06px;font-size:16px;line-height:24px;color:#000;width:74px;text-align:center;">-600</div>
<div class="t" style="left:1375px;top:696.06px;font-size:16px;line-height:24px;color:#000;width:74px;text-align:center;">-635</div>
<div class="t" style="left:1450px;top:696.06px;font-size:16px;line-height:24px;color:#000;width:74px;text-align:center;">-600</div>
<div class="t" style="left:1525px;top:696.06px;font-size:16px;line-height:24px;color:#000;width:74px;text-align:center;">-580</div>
<div class="t" style="left:1600px;top:696.06px;font-size:16px;line-height:24px;color:#000;width:74px;text-align:center;">-600</div>
<div class="t" style="left:1675px;top:696.06px;font-size:16px;line-height:24px;color:#000;width:74px;text-align:center;">-610</div>
<div class="t" style="left:315px;top:719.06px;font-size:16px;line-height:24px;color:#000;width:84px;text-align:center;">-55</div>
<div class="t" style="left:400px;top:719.06px;font-size:16px;line-height:24px;color:#000;width:74px;text-align:center;">-55</div>
<div class="t" style="left:475px;top:719.06px;font-size:16px;line-height:24px;color:#000;width:74px;text-align:center;">-55</div>
<div class="t" style="left:550px;top:719.06px;font-size:16px;line-height:24px;color:#000;width:74px;text-align:center;">-55</div>
<div class="t" style="left:625px;top:719.06px;font-size:16px;line-height:24px;color:#000;width:74px;text-align:center;">-55</div>
<div class="t" style="left:700px;top:719.06px;font-size:16px;line-height:24px;color:#000;width:74px;text-align:center;">-55</div>
<div class="t" style="left:775px;top:719.06px;font-size:16px;line-height:24px;color:#000;width:74px;text-align:center;">-55</div>
<div class="t" style="left:850px;top:719.06px;font-size:16px;line-height:24px;color:#000;width:74px;text-align:center;">-55</div>
<div class="t" style="left:925px;top:719.06px;font-size:16px;line-height:24px;color:#000;width:74px;text-align:center;">-55</div>
<div class="t" style="left:1000px;top:719.06px;font-size:16px;line-height:24px;color:#000;width:74px;text-align:center;">-55</div>
<div class="t" style="left:1075px;top:719.06px;font-size:16px;line-height:24px;color:#000;width:74px;text-align:center;">-55</div>
<div class="t" style="left:1150px;top:719.06px;font-size:16px;line-height:24px;color:#000;width:74px;text-align:center;">-55</div>
<div class="t" style="left:1225px;top:719.06px;font-size:16px;line-height:24px;color:#000;width:74px;text-align:center;">-55</div>
<div class="t" style="left:1300px;top:719.06px;font-size:16px;line-height:24px;color:#000;width:74px;text-align:center;">-55</div>
<div class="t" style="left:1375px;top:719.06px;font-size:16px;line-height:24px;color:#000;width:74px;text-align:center;">-55</div>
<div class="t" style="left:1450px;top:719.06px;font-size:16px;line-height:24px;color:#000;width:74px;text-align:center;">-55</div>
<div class="t" style="left:1525px;top:719.06px;font-size:16px;line-height:24px;color:#000;width:74px;text-align:center;">-55</div>
<div class="t" style="left:1600px;top:719.06px;font-size:16px;line-height:24px;color:#000;width:74px;text-align:center;">-55</div>
<div class="t" style="left:1675px;top:719.06px;font-size:16px;line-height:24px;color:#000;width:74px;text-align:center;">-55</div>
<div class="t" style="left:315px;top:742.06px;font-size:16px;line-height:24px;color:#000;width:84px;text-align:center;">-50</div>
<div class="t" style="left:400px;top:742.06px;font-size:16px;line-height:24px;color:#000;width:74px;text-align:center;">-50</div>
<div class="t" style="left:475px;top:742.06px;font-size:16px;line-height:24px;color:#000;width:74px;text-align:center;">-50</div>
<div class="t" style="left:550px;top:742.06px;font-size:16px;line-height:24px;color:#000;width:74px;text-align:center;">-50</div>
<div class="t" style="left:625px;top:742.06px;font-size:16px;line-height:24px;color:#000;width:74px;text-align:center;">-50</div>
<div class="t" style="left:700px;top:742.06px;font-size:16px;line-height:24px;color:#000;width:74px;text-align:center;">-50</div>
<div class="t" style="left:775px;top:742.06px;font-size:16px;line-height:24px;color:#000;width:74px;text-align:center;">-50</div>
<div class="t" style="left:850px;top:742.06px;font-size:16px;line-height:24px;color:#000;width:74px;text-align:center;">-50</div>
<div class="t" style="left:925px;top:742.06px;font-size:16px;line-height:24px;color:#000;width:74px;text-align:center;">-50</div>
<div class="t" style="left:1000px;top:742.06px;font-size:16px;line-height:24px;color:#000;width:74px;text-align:center;">-50</div>
<div class="t" style="left:1075px;top:742.06px;font-size:16px;line-height:24px;color:#000;width:74px;text-align:center;">-50</div>
<div class="t" style="left:1150px;top:742.06px;font-size:16px;line-height:24px;color:#000;width:74px;text-align:center;">-50</div>
<div class="t" style="left:1225px;top:742.06px;font-size:16px;line-height:24px;color:#000;width:74px;text-align:center;">-50</div>
<div class="t" style="left:1300px;top:742.06px;font-size:16px;line-height:24px;color:#000;width:74px;text-align:center;">-50</div>
<div class="t" style="left:1375px;top:742.06px;font-size:16px;line-height:24px;color:#000;width:74px;text-align:center;">-50</div>
<div class="t" style="left:1450px;top:742.06px;font-size:16px;line-height:24px;color:#000;width:74px;text-align:center;">-50</div>
<div class="t" style="left:1525px;top:742.06px;font-size:16px;line-height:24px;color:#000;width:74px;text-align:center;">-50</div>
<div class="t" style="left:1600px;top:742.06px;font-size:16px;line-height:24px;color:#000;width:74px;text-align:center;">-50</div>
<div class="t" style="left:1675px;top:742.06px;font-size:16px;line-height:24px;color:#000;width:74px;text-align:center;">-50</div>
<div class="t" style="left:315px;top:765.06px;font-size:16px;line-height:24px;color:#000;width:84px;text-align:center;">-30</div>
<div class="t" style="left:400px;top:765.06px;font-size:16px;line-height:24px;color:#000;width:74px;text-align:center;">-30</div>
<div class="t" style="left:475px;top:765.06px;font-size:16px;line-height:24px;color:#000;width:74px;text-align:center;">-30</div>
<div class="t" style="left:550px;top:765.06px;font-size:16px;line-height:24px;color:#000;width:74px;text-align:center;">-30</div>
<div class="t" style="left:625px;top:765.06px;font-size:16px;line-height:24px;color:#000;width:74px;text-align:center;">-30</div>
<div class="t" style="left:700px;top:765.06px;font-size:16px;line-height:24px;color:#000;width:74px;text-align:center;">-30</div>
<div class="t" style="left:775px;top:765.06px;font-size:16px;line-height:24px;color:#000;width:74px;text-align:center;">-30</div>
<div class="t" style="left:850px;top:765.06px;font-size:16px;line-height:24px;color:#000;width:74px;text-align:center;">-30</div>
<div class="t" style="left:925px;top:765.06px;font-size:16px;line-height:24px;color:#000;width:74px;text-align:center;">-30</div>
<div class="t" style="left:1000px;top:765.06px;font-size:16px;line-height:24px;color:#000;width:74px;text-align:center;">-30</div>
<div class="t" style="left:1075px;top:765.06px;font-size:16px;line-height:24px;color:#000;width:74px;text-align:center;">-30</div>
<div class="t" style="left:1150px;top:765.06px;font-size:16px;line-height:24px;color:#000;width:74px;text-align:center;">-30</div>
<div class="t" style="left:1225px;top:765.06px;font-size:16px;line-height:24px;color:#000;width:74px;text-align:center;">-30</div>
<div class="t" style="left:1300px;top:765.06px;font-size:16px;line-height:24px;color:#000;width:74px;text-align:center;">-30</div>
<div class="t" style="left:1375px;top:765.06px;font-size:16px;line-height:24px;color:#000;width:74px;text-align:center;">-30</div>
<div class="t" style="left:1450px;top:765.06px;font-size:16px;line-height:24px;color:#000;width:74px;text-align:center;">-30</div>
<div class="t" style="left:1525px;top:765.06px;font-size:16px;line-height:24px;color:#000;width:74px;text-align:center;">-30</div>
<div class="t" style="left:1600px;top:765.06px;font-size:16px;line-height:24px;color:#000;width:74px;text-align:center;">-30</div>
<div class="t" style="left:1675px;top:765.06px;font-size:16px;line-height:24px;color:#000;width:74px;text-align:center;">-30</div>
<div class="t" style="left:315px;top:788.06px;font-size:16px;line-height:24px;color:#000;width:84px;text-align:center;">-100</div>
<div class="t" style="left:400px;top:788.06px;font-size:16px;line-height:24px;color:#000;width:74px;text-align:center;">-100</div>
<div class="t" style="left:475px;top:788.06px;font-size:16px;line-height:24px;color:#000;width:74px;text-align:center;">-100</div>
<div class="t" style="left:550px;top:788.06px;font-size:16px;line-height:24px;color:#000;width:74px;text-align:center;">-100</div>
<div class="t" style="left:625px;top:788.06px;font-size:16px;line-height:24px;color:#000;width:74px;text-align:center;">-100</div>
<div class="t" style="left:700px;top:788.06px;font-size:16px;line-height:24px;color:#000;width:74px;text-align:center;">-100</div>
<div class="t" style="left:775px;top:788.06px;font-size:16px;line-height:24px;color:#000;width:74px;text-align:center;">-100</div>
<div class="t" style="left:850px;top:788.06px;font-size:16px;line-height:24px;color:#000;width:74px;text-align:center;">-100</div>
<div class="t" style="left:925px;top:788.06px;font-size:16px;line-height:24px;color:#000;width:74px;text-align:center;">-100</div>
<div class="t" style="left:1000px;top:788.06px;font-size:16px;line-height:24px;color:#000;width:74px;text-align:center;">-100</div>
<div class="t" style="left:1075px;top:788.06px;font-size:16px;line-height:24px;color:#000;width:74px;text-align:center;">-100</div>
<div class="t" style="left:1150px;top:788.06px;font-size:16px;line-height:24px;color:#000;width:74px;text-align:center;">-100</div>
<div class="t" style="left:1225px;top:788.06px;font-size:16px;line-height:24px;color:#000;width:74px;text-align:center;">-100</div>
<div class="t" style="left:1300px;top:788.06px;font-size:16px;line-height:24px;color:#000;width:74px;text-align:center;">-100</div>
<div class="t" style="left:1375px;top:788.06px;font-size:16px;line-height:24px;color:#000;width:74px;text-align:center;">-100</div>
<div class="t" style="left:1450px;top:788.06px;font-size:16px;line-height:24px;color:#000;width:74px;text-align:center;">-100</div>
<div class="t" style="left:1525px;top:788.06px;font-size:16px;line-height:24px;color:#000;width:74px;text-align:center;">-100</div>
<div class="t" style="left:1600px;top:788.06px;font-size:16px;line-height:24px;color:#000;width:74px;text-align:center;">-100</div>
<div class="t" style="left:1675px;top:788.06px;font-size:16px;line-height:24px;color:#000;width:74px;text-align:center;">-100</div>
<div class="t" style="left:315px;top:811.06px;font-size:16px;line-height:24px;color:#000;width:84px;text-align:center;">-125</div>
<div class="t" style="left:400px;top:811.06px;font-size:16px;line-height:24px;color:#000;width:74px;text-align:center;">-125</div>
<div class="t" style="left:475px;top:811.06px;font-size:16px;line-height:24px;color:#000;width:74px;text-align:center;">-125</div>
<div class="t" style="left:550px;top:811.06px;font-size:16px;line-height:24px;color:#000;width:74px;text-align:center;">-125</div>
<div class="t" style="left:625px;top:811.06px;font-size:16px;line-height:24px;color:#000;width:74px;text-align:center;">-125</div>
<div class="t" style="left:700px;top:811.06px;font-size:16px;line-height:24px;color:#000;width:74px;text-align:center;">-125</div>
<div class="t" style="left:775px;top:811.06px;font-size:16px;line-height:24px;color:#000;width:74px;text-align:center;">-125</div>
<div class="t" style="left:850px;top:811.06px;font-size:16px;line-height:24px;color:#000;width:74px;text-align:center;">-125</div>
<div class="t" style="left:925px;top:811.06px;font-size:16px;line-height:24px;color:#000;width:74px;text-align:center;">-125</div>
<div class="t" style="left:1000px;top:811.06px;font-size:16px;line-height:24px;color:#000;width:74px;text-align:center;">-125</div>
<div class="t" style="left:1075px;top:811.06px;font-size:16px;line-height:24px;color:#000;width:74px;text-align:center;">-125</div>
<div class="t" style="left:1150px;top:811.06px;font-size:16px;line-height:24px;color:#000;width:74px;text-align:center;">-125</div>
<div class="t" style="left:1225px;top:811.06px;font-size:16px;line-height:24px;color:#000;width:74px;text-align:center;">-125</div>
<div class="t" style="left:1300px;top:811.06px;font-size:16px;line-height:24px;color:#000;width:74px;text-align:center;">-125</div>
<div class="t" style="left:1375px;top:811.06px;font-size:16px;line-height:24px;color:#000;width:74px;text-align:center;">-125</div>
<div class="t" style="left:1450px;top:811.06px;font-size:16px;line-height:24px;color:#000;width:74px;text-align:center;">-125</div>
<div class="t" style="left:1525px;top:811.06px;font-size:16px;line-height:24px;color:#000;width:74px;text-align:center;">-125</div>
<div class="t" style="left:1600px;top:811.06px;font-size:16px;line-height:24px;color:#000;width:74px;text-align:center;">-125</div>
<div class="t" style="left:1675px;top:811.06px;font-size:16px;line-height:24px;color:#000;width:74px;text-align:center;">-125</div>
<div class="t" style="left:315px;top:834.06px;font-size:16px;line-height:24px;color:#000;width:84px;text-align:center;">-100</div>
<div class="t" style="left:400px;top:834.06px;font-size:16px;line-height:24px;color:#000;width:74px;text-align:center;">-100</div>
<div class="t" style="left:475px;top:834.06px;font-size:16px;line-height:24px;color:#000;width:74px;text-align:center;">-100</div>
<div class="t" style="left:550px;top:834.06px;font-size:16px;line-height:24px;color:#000;width:74px;text-align:center;">-100</div>
<div class="t" style="left:625px;top:834.06px;font-size:16px;line-height:24px;color:#000;width:74px;text-align:center;">-100</div>
<div class="t" style="left:700px;top:834.06px;font-size:16px;line-height:24px;color:#000;width:74px;text-align:center;">-100</div>
<div class="t" style="left:775px;top:834.06px;font-size:16px;line-height:24px;color:#000;width:74px;text-align:center;">-100</div>
<div class="t" style="left:850px;top:834.06px;font-size:16px;line-height:24px;color:#000;width:74px;text-align:center;">-100</div>
<div class="t" style="left:925px;top:834.06px;font-size:16px;line-height:24px;color:#000;width:74px;text-align:center;">-100</div>
<div class="t" style="left:1000px;top:834.06px;font-size:16px;line-height:24px;color:#000;width:74px;text-align:center;">-100</div>
<div class="t" style="left:1075px;top:834.06px;font-size:16px;line-height:24px;color:#000;width:74px;text-align:center;">-100</div>
<div class="t" style="left:1150px;top:834.06px;font-size:16px;line-height:24px;color:#000;width:74px;text-align:center;">-100</div>
<div class="t" style="left:1225px;top:834.06px;font-size:16px;line-height:24px;color:#000;width:74px;text-align:center;">-100</div>
<div class="t" style="left:1300px;top:834.06px;font-size:16px;line-height:24px;color:#000;width:74px;text-align:center;">-100</div>
<div class="t" style="left:1375px;top:834.06px;font-size:16px;line-height:24px;color:#000;width:74px;text-align:center;">-100</div>
<div class="t" style="left:1450px;top:834.06px;font-size:16px;line-height:24px;color:#000;width:74px;text-align:center;">-100</div>
<div class="t" style="left:1525px;top:834.06px;font-size:16px;line-height:24px;color:#000;width:74px;text-align:center;">-100</div>
<div class="t" style="left:1600px;top:834.06px;font-size:16px;line-height:24px;color:#000;width:74px;text-align:center;">-100</div>
<div class="t" style="left:1675px;top:834.06px;font-size:16px;line-height:24px;color:#000;width:74px;text-align:center;">-100</div>
<div class="t" style="left:315px;top:857.06px;font-size:16px;line-height:24px;color:#000;width:84px;text-align:center;">-55</div>
<div class="t" style="left:400px;top:857.06px;font-size:16px;line-height:24px;color:#000;width:74px;text-align:center;">-55</div>
<div class="t" style="left:475px;top:857.06px;font-size:16px;line-height:24px;color:#000;width:74px;text-align:center;">-55</div>
<div class="t" style="left:550px;top:857.06px;font-size:16px;line-height:24px;color:#000;width:74px;text-align:center;">-55</div>
<div class="t" style="left:625px;top:857.06px;font-size:16px;line-height:24px;color:#000;width:74px;text-align:center;">-55</div>
<div class="t" style="left:700px;top:857.06px;font-size:16px;line-height:24px;color:#000;width:74px;text-align:center;">-55</div>
<div class="t" style="left:775px;top:857.06px;font-size:16px;line-height:24px;color:#000;width:74px;text-align:center;">-55</div>
<div class="t" style="left:850px;top:857.06px;font-size:16px;line-height:24px;color:#000;width:74px;text-align:center;">-55</div>
<div class="t" style="left:925px;top:857.06px;font-size:16px;line-height:24px;color:#000;width:74px;text-align:center;">-55</div>
<div class="t" style="left:1000px;top:857.06px;font-size:16px;line-height:24px;color:#000;width:74px;text-align:center;">-55</div>
<div class="t" style="left:1075px;top:857.06px;font-size:16px;line-height:24px;color:#000;width:74px;text-align:center;">-55</div>
<div class="t" style="left:1150px;top:857.06px;font-size:16px;line-height:24px;color:#000;width:74px;text-align:center;">-55</div>
<div class="t" style="left:1225px;top:857.06px;font-size:16px;line-height:24px;color:#000;width:74px;text-align:center;">-55</div>
<div class="t" style="left:1300px;top:857.06px;font-size:16px;line-height:24px;color:#000;width:74px;text-align:center;">-55</div>
<div class="t" style="left:1375px;top:857.06px;font-size:16px;line-height:24px;color:#000;width:74px;text-align:center;">-55</div>
<div class="t" style="left:1450px;top:857.06px;font-size:16px;line-height:24px;color:#000;width:74px;text-align:center;">-55</div>
<div class="t" style="left:1525px;top:857.06px;font-size:16px;line-height:24px;color:#000;width:74px;text-align:center;">-55</div>
<div class="t" style="left:1600px;top:857.06px;font-size:16px;line-height:24px;color:#000;width:74px;text-align:center;">-55</div>
<div class="t" style="left:1675px;top:857.06px;font-size:16px;line-height:24px;color:#000;width:74px;text-align:center;">-55</div>
</body></html>
